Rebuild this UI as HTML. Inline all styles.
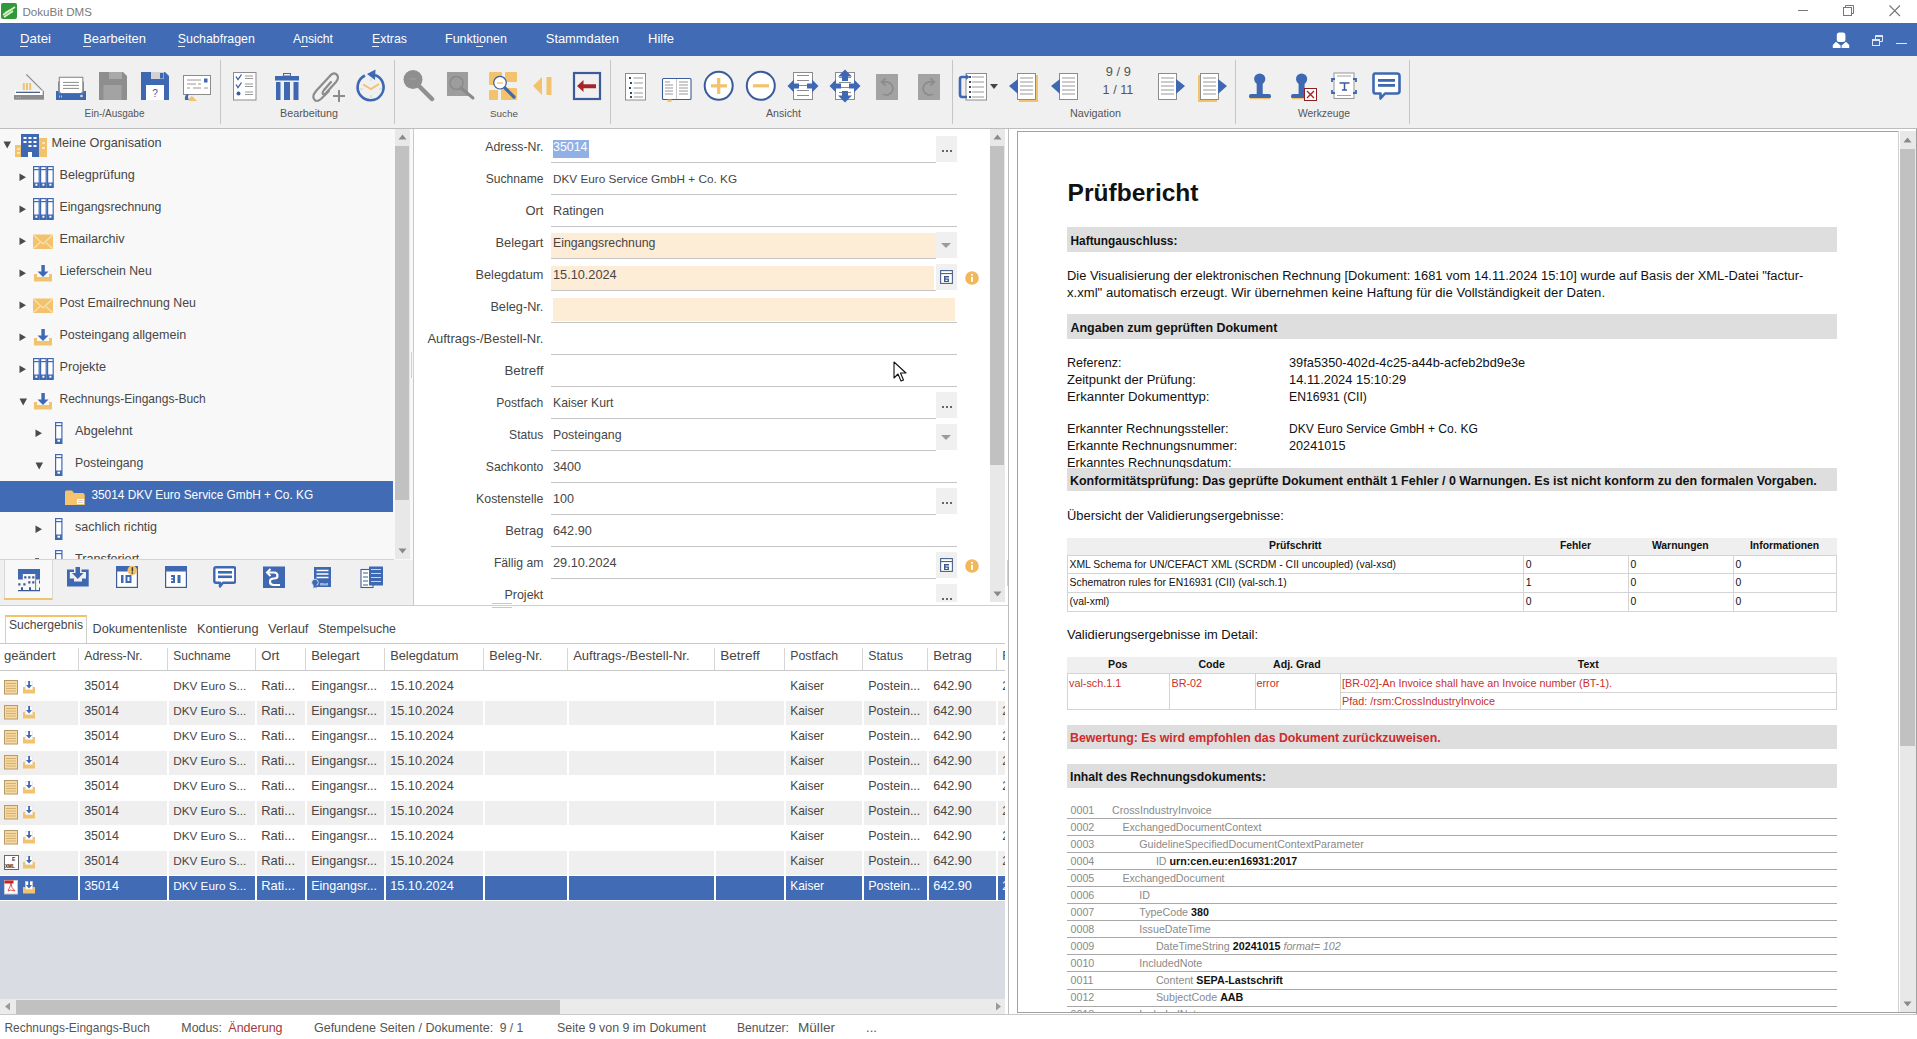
<!DOCTYPE html><html><head><meta charset="utf-8"><style>
*{margin:0;padding:0;box-sizing:border-box}
html,body{width:1917px;height:1039px;overflow:hidden;background:#fff;font-family:"Liberation Sans",sans-serif}
.t{position:absolute;white-space:nowrap}
.r{position:absolute}
</style></head><body>
<div class="r" style="left:0px;top:0px;width:1917px;height:23px;background:#ffffff;"></div>
<svg class="r" style="left:1px;top:3px" width="17" height="17" viewBox="0 0 17 17"><rect x="0" y="0" width="16" height="16" rx="2" fill="#2f9a3a"/><path d="M2 12 L14 4 M3 14 L12 8 M4 10 L11 6" stroke="#dff3c8" stroke-width="1.6"/></svg>
<div class="t" style="left:22.50px;top:7.01px;font-size:11.58px;line-height:11.58px;color:#7a7a7a;">DokuBit DMS</div>
<div class="r" style="left:1798px;top:10px;width:10px;height:1px;background:#777;"></div>
<svg class="r" style="left:1843px;top:4.5px" width="12" height="12"><rect x="0.5" y="2.5" width="8" height="8" fill="none" stroke="#777"/><path d="M2.5 2.5V0.5H10.5V8.5H8.5" fill="none" stroke="#777"/></svg>
<svg class="r" style="left:1888.5px;top:4.5px" width="12" height="12"><path d="M0.5 0.5L11 11M11 0.5L0.5 11" stroke="#777" stroke-width="1.1"/></svg>
<div class="r" style="left:0px;top:23px;width:1917px;height:33px;background:#416bb5;"></div>
<div class="t" style="left:20.00px;top:31.71px;font-size:13.28px;line-height:13.28px;color:#ffffff;">Datei</div>
<div class="t" style="left:83.20px;top:31.71px;font-size:12.98px;line-height:12.98px;color:#ffffff;">Bearbeiten</div>
<div class="t" style="left:177.80px;top:32.71px;font-size:12.37px;line-height:12.37px;color:#ffffff;">Suchabfragen</div>
<div class="t" style="left:293.00px;top:32.71px;font-size:12.20px;line-height:12.20px;color:#ffffff;">Ansicht</div>
<div class="t" style="left:372.00px;top:32.70px;font-size:12.35px;line-height:12.35px;color:#ffffff;">Extras</div>
<div class="t" style="left:445.00px;top:32.71px;font-size:12.53px;line-height:12.53px;color:#ffffff;">Funktionen</div>
<div class="t" style="left:545.80px;top:32.70px;font-size:12.88px;line-height:12.88px;color:#ffffff;">Stammdaten</div>
<div class="t" style="left:648.00px;top:31.71px;font-size:13.00px;line-height:13.00px;color:#ffffff;">Hilfe</div>
<div class="r" style="left:20px;top:46px;width:8px;height:1px;background:#e8eefa;"></div>
<div class="r" style="left:83px;top:46px;width:8px;height:1px;background:#e8eefa;"></div>
<div class="r" style="left:178px;top:46px;width:7px;height:1px;background:#e8eefa;"></div>
<div class="r" style="left:301px;top:46px;width:7px;height:1px;background:#e8eefa;"></div>
<div class="r" style="left:372px;top:46px;width:7px;height:1px;background:#e8eefa;"></div>
<div class="r" style="left:476px;top:46px;width:7px;height:1px;background:#e8eefa;"></div>
<svg class="r" style="left:1832px;top:32px" width="18" height="17" viewBox="0 0 18 17"><rect x="4.8" y="0.5" width="8.6" height="9.5" rx="2.5" fill="#fff"/><path d="M0.8 16 V13 L4 9.8 L8.6 13.5 V16Z M17.2 16 V13 L14 9.8 L9.6 13.5 V16Z" fill="#fff"/></svg>
<svg class="r" style="left:1871px;top:34px" width="13" height="12" viewBox="0 0 13 12"><rect x="1.5" y="5.5" width="7" height="6" fill="none" stroke="#dfe7f5"/><rect x="1.5" y="5" width="7" height="2" fill="#dfe7f5"/><path d="M4.5 5V1.5H11.5V7.5H8.5" fill="none" stroke="#dfe7f5"/><rect x="4.5" y="1" width="7" height="2" fill="#dfe7f5"/></svg>
<div class="r" style="left:1896px;top:43px;width:11px;height:1.2px;background:#dfe7f5;"></div>
<div class="r" style="left:0px;top:56px;width:1917px;height:72px;background:#f0f0f0;"></div>
<div class="r" style="left:220px;top:60px;width:1px;height:64px;background:#c6c6c6;"></div>
<div class="r" style="left:394px;top:60px;width:1px;height:64px;background:#c6c6c6;"></div>
<div class="r" style="left:610px;top:60px;width:1px;height:64px;background:#c6c6c6;"></div>
<div class="r" style="left:952px;top:60px;width:1px;height:64px;background:#c6c6c6;"></div>
<div class="r" style="left:1235px;top:60px;width:1px;height:64px;background:#c6c6c6;"></div>
<div class="r" style="left:1409px;top:60px;width:1px;height:64px;background:#c6c6c6;"></div>
<div class="t" style="left:84.50px;top:108.81px;font-size:9.99px;line-height:9.99px;color:#555555;">Ein-/Ausgabe</div>
<div class="t" style="left:280.00px;top:107.81px;font-size:10.76px;line-height:10.76px;color:#555555;">Bearbeitung</div>
<div class="t" style="left:490.00px;top:108.80px;font-size:9.88px;line-height:9.88px;color:#555555;">Suche</div>
<div class="t" style="left:766.00px;top:107.80px;font-size:10.67px;line-height:10.67px;color:#555555;">Ansicht</div>
<div class="t" style="left:1070.00px;top:107.81px;font-size:10.79px;line-height:10.79px;color:#555555;">Navigation</div>
<div class="t" style="left:1298.00px;top:108.82px;font-size:10.32px;line-height:10.32px;color:#555555;">Werkzeuge</div>
<svg class="r" style="left:14px;top:73px" width="31" height="28" viewBox="0 0 31 28"><path d="M12.3 1.4 L29.3 18.4 V22" fill="none" stroke="#8c8c8c" stroke-width="1.3"/><rect x="0" y="22" width="30" height="4.7" fill="#8c8c8c"/><rect x="1" y="17.6" width="28" height="4.4" fill="#fff"/><rect x="2" y="18.7" width="24" height="1.3" fill="#4a5f85"/><rect x="8.8" y="10" width="2" height="7" fill="#f3c26d"/><rect x="12" y="10" width="2" height="7" fill="#f3c26d"/><rect x="15.2" y="10" width="2" height="7" fill="#f3c26d"/><path d="M29.3 18 V22" stroke="#8c8c8c" stroke-width="1.3"/><path d="M2 24.5h1M4 24.5h1M6 24.5h1" stroke="#bbb" stroke-width="0.8"/></svg>
<svg class="r" style="left:56px;top:76px" width="31" height="25" viewBox="0 0 31 25"><rect x="0" y="15" width="30" height="9" fill="#3f68b3"/><rect x="2" y="5.5" width="1.3" height="10" fill="#8c8c8c"/><rect x="26.7" y="5.5" width="1.3" height="10" fill="#8c8c8c"/><rect x="3.3" y="1.3" width="23.5" height="15.5" fill="#fff" stroke="#8c8c8c" stroke-width="1.1"/><rect x="5" y="14" width="20" height="3" fill="#fff"/><path d="M7 6.4H23M7 9.4H23M7 12.4H23" stroke="#8c8c8c" stroke-width="1"/><path d="M3.5 19.5v2M5.5 19.5v2" stroke="#cfd8ee" stroke-width="0.8"/><circle cx="25.5" cy="20" r="1.3" fill="#ddd"/></svg>
<svg class="r" style="left:99px;top:72px" width="29" height="29" viewBox="0 0 29 29"><path d="M0 0H24L28 4V28H0Z" fill="#8e8e8e"/><rect x="10" y="0" width="13" height="7" fill="#a9a9a9"/><rect x="4.5" y="13" width="18" height="15" fill="#a3a3a3"/></svg>
<svg class="r" style="left:141px;top:72px" width="29" height="29" viewBox="0 0 29 29"><path d="M0 0H24L28 4V28H0Z" fill="#3f68b3"/><rect x="10" y="0" width="13" height="7" fill="#d2d2d2"/><rect x="19" y="1" width="3.5" height="5.5" fill="#3f68b3"/><rect x="5" y="13" width="18" height="15" fill="#fff"/><text x="14" y="24.5" font-size="10" font-family="Liberation Sans" fill="#3b5c9a" text-anchor="middle">?</text></svg>
<svg class="r" style="left:183px;top:75px" width="30" height="28" viewBox="0 0 30 28"><rect x="0.5" y="0.5" width="27" height="19" fill="#fff" stroke="#8c8c8c"/><rect x="21" y="3.5" width="3.5" height="4" fill="#3f68b3"/><path d="M4 5H18M4 9H13M15 9H18M4 13H7M10 13H18M21 13H25" stroke="#8c8c8c" stroke-width="0.9"/><path d="M2 25 Q1 19 6 19 Q4 22 6 25Z" fill="#3f68b3"/><path d="M6 25 Q8 18 12 24 L14 26 H6Z" fill="#f3c26d"/></svg>
<svg class="r" style="left:233px;top:72px" width="24" height="29" viewBox="0 0 24 29"><rect x="0.5" y="0.5" width="22.5" height="27.5" fill="#fff" stroke="#8c8c8c"/><path d="M3 4.5L5 7.5L8.5 2.5M3 12.5L5 15.5L8.5 10.5" fill="none" stroke="#3b5c9a" stroke-width="1.3"/><circle cx="5.5" cy="21.5" r="2" fill="#3b5c9a"/><path d="M12 4H20M12 6.5H20M12 12H20M12 14.5H20M12 20H20M12 22.5H20" stroke="#8c8c8c" stroke-width="0.9"/></svg>
<svg class="r" style="left:274px;top:73px" width="26" height="28" viewBox="0 0 26 28"><rect x="1" y="3" width="24" height="4.5" fill="#3f68b3"/><rect x="9.5" y="0.5" width="7" height="2.5" fill="none" stroke="#3f68b3" stroke-width="1"/><rect x="2" y="9" width="4.5" height="18" fill="#3f68b3"/><rect x="10" y="9" width="6" height="18" fill="#3f68b3"/><rect x="19.5" y="9" width="5" height="18" fill="#3f68b3"/></svg>
<svg class="r" style="left:312px;top:69px" width="34" height="34" viewBox="0 0 34 34"><path d="M17 22 L9 30 Q4 34 2 30 Q0 27 4 22 L17 8 Q21 3 24 5 Q28 8 24 13 L14 24 Q12 26 11 25 Q10 24 12 21 L19 13" fill="none" stroke="#8c8c8c" stroke-width="2.2" stroke-linecap="round"/><path d="M21 27H33M27 21V33" stroke="#8c8c8c" stroke-width="2"/></svg>
<svg class="r" style="left:355px;top:69px" width="33" height="34" viewBox="0 0 33 34"><path d="M10 6.5 A13 13 0 1 0 20 6" fill="none" stroke="#3f68b3" stroke-width="2.6"/><path d="M12 5 L20.5 0.5 L20 11Z" fill="#3f68b3"/><path d="M8 15.5 L16 20 L24 15" fill="none" stroke="#f3c26d" stroke-width="2"/><path d="M16 9.5V12M16 26V29M5 20H8M24 20H27" stroke="#c8c8c8" stroke-width="0.8"/></svg>
<svg class="r" style="left:403px;top:69px" width="33" height="33" viewBox="0 0 33 33"><circle cx="10" cy="10.5" r="9.5" fill="#8f8f8f"/><line x1="15" y1="16" x2="29" y2="30" stroke="#8f8f8f" stroke-width="4.5" stroke-linecap="round"/><path d="M6 10H13" stroke="#a0a0a0" stroke-width="1"/></svg>
<svg class="r" style="left:446px;top:71px" width="30" height="30" viewBox="0 0 30 30"><rect x="1" y="1" width="21" height="24" fill="#9d9d9d"/><circle cx="10.5" cy="12" r="6.5" fill="none" stroke="#8a8a8a" stroke-width="1.5"/><line x1="15" y1="17" x2="27" y2="27" stroke="#8a8a8a" stroke-width="3" stroke-linecap="round"/></svg>
<svg class="r" style="left:489px;top:72px" width="29" height="29" viewBox="0 0 29 29"><rect x="0" y="0" width="13" height="13" rx="1" fill="#f3c26d"/><rect x="16" y="0" width="12" height="10" rx="1" fill="#f3c26d"/><rect x="0" y="18" width="9" height="10" rx="1" fill="#f3c26d"/><rect x="12" y="16" width="16" height="12" rx="1" fill="#f3c26d"/><circle cx="11" cy="10.7" r="6.3" fill="#fff" stroke="#3b5c9a" stroke-width="1.2"/><path d="M8 11H14" stroke="#f3c26d" stroke-width="1.3"/><line x1="16" y1="16" x2="25" y2="25" stroke="#3f68b3" stroke-width="3.2" stroke-linecap="round"/></svg>
<svg class="r" style="left:532px;top:76px" width="22" height="21" viewBox="0 0 22 21"><path d="M1 10 L10 1 V19Z" fill="#f3c26d"/><rect x="14.5" y="1" width="5" height="18" fill="#f3c26d"/></svg>
<svg class="r" style="left:572px;top:71px" width="30" height="30" viewBox="0 0 30 30"><rect x="2" y="2" width="26" height="26" fill="none" stroke="#3b5c9a" stroke-width="2.2"/><path d="M5 15 L11.5 9 V13.3 H24 V17.3 H11.5 V21Z" fill="#a5262a"/></svg>
<svg class="r" style="left:624px;top:72px" width="23" height="29" viewBox="0 0 23 29"><rect x="1.5" y="1.5" width="20" height="26.5" fill="#fff" stroke="#8c8c8c"/><path d="M5 5h2v2h-2zM6 10h2v2h-2zM5 15h2v2h-2zM6 20h2v2h-2zM6 24h2v2h-2z" fill="#3a4a6a"/><path d="M9.5 6H19M10 11H19M9.5 16H19M10 21H19M10 25H19" stroke="#8c8c8c" stroke-width="0.9"/></svg>
<svg class="r" style="left:661px;top:77px" width="32" height="26" viewBox="0 0 32 26"><rect x="1.5" y="1.5" width="28.5" height="21" rx="1" fill="#fff" stroke="#3b5c9a" stroke-width="1.1"/><line x1="15.5" y1="2" x2="15.5" y2="22" stroke="#bbb" stroke-width="0.8"/><path d="M4 5H9M4 8H12M4 11H12M4 14H12M4 17H12M18 5H27M18 8H27M18 11H27M18 14H27M18 17H27" stroke="#8c8c8c" stroke-width="0.9"/><rect x="6.5" y="22.5" width="4" height="2.5" fill="#f3c26d"/></svg>
<svg class="r" style="left:703px;top:70px" width="32" height="32" viewBox="0 0 32 32"><circle cx="15.7" cy="15.8" r="14" fill="#fff" stroke="#3b5c9a" stroke-width="2"/><path d="M8 15.8H24M15.7 8V24" stroke="#f3c26d" stroke-width="3.2"/></svg>
<svg class="r" style="left:745px;top:70px" width="32" height="32" viewBox="0 0 32 32"><circle cx="15.8" cy="15.8" r="14" fill="#fff" stroke="#3b5c9a" stroke-width="2"/><path d="M8 15.8H24" stroke="#f3c26d" stroke-width="3.2"/></svg>
<svg class="r" style="left:787px;top:71px" width="33" height="31" viewBox="0 0 33 31"><rect x="6.5" y="1.5" width="19" height="27" fill="#fff" stroke="#8c8c8c"/><path d="M10 4.5H22M10 9.5H22M10 14.5H22M10 19.5H22M10 24.5H22" stroke="#8c8c8c" stroke-width="1"/><path d="M0.5 15 L7 8.5 V12.5 H12 V17.5 H7 V21.5Z M31.5 15 L25 8.5 V12.5 H20 V17.5 H25 V21.5Z" fill="#3f68b3"/></svg>
<svg class="r" style="left:829px;top:69px" width="33" height="34" viewBox="0 0 33 34"><rect x="6.5" y="3.5" width="19" height="27" fill="#fff" stroke="#8c8c8c"/><path d="M10 8.5H22M10 13.5H22M10 18.5H22M10 23.5H22" stroke="#8c8c8c" stroke-width="1"/><path d="M16 0.5 L23 7.5 H19 V12 H13 V7.5 H9Z M16 33.5 L23 26.5 H19 V22 H13 V26.5 H9Z M0.5 17 L7 10.5 V14.5 H12 V19.5 H7 V23.5Z M31.5 17 L25 10.5 V14.5 H20 V19.5 H25 V23.5Z" fill="#3f68b3"/></svg>
<svg class="r" style="left:876px;top:74px" width="22" height="26" viewBox="0 0 22 26"><rect x="0" y="0" width="22" height="26" fill="#a3a3a3"/><path d="M6 8 H11 A6.5 6.5 0 1 1 7 20" fill="none" stroke="#8d8d8d" stroke-width="1.8"/><path d="M9.5 4.5 L5.5 8 L9.5 11.5" fill="none" stroke="#8d8d8d" stroke-width="1.8"/></svg>
<svg class="r" style="left:918px;top:74px" width="22" height="26" viewBox="0 0 22 26"><rect x="0" y="0" width="22" height="26" fill="#a3a3a3"/><path d="M16 8 H11 A6.5 6.5 0 1 0 15 20" fill="none" stroke="#8d8d8d" stroke-width="1.8"/><path d="M12.5 4.5 L16.5 8 L12.5 11.5" fill="none" stroke="#8d8d8d" stroke-width="1.8"/></svg>
<svg class="r" style="left:958px;top:72px" width="43" height="30" viewBox="0 0 43 30"><rect x="8" y="1.5" width="20.5" height="26.5" fill="#fff" stroke="#8c8c8c"/><path d="M14 5H26M14 10H26M14 15H26M14 20H26M14 25H26" stroke="#8c8c8c" stroke-width="0.9"/><path d="M11 4h2v2h-2zM11 9h2v2h-2zM11 14h2v2h-2zM11 19h2v2h-2zM11 24h2v2h-2z" fill="#3a4a6a"/><path d="M9 5 H4 Q2 5 2 7 V22 Q2 25 4 25 H9" fill="none" stroke="#3f68b3" stroke-width="2.6"/><path d="M8 2 L11.5 5 L8 8Z" fill="#3f68b3"/><path d="M32 12H40L36 17Z" fill="#444"/></svg>
<svg class="r" style="left:1008px;top:72px" width="32" height="31" viewBox="0 0 32 31"><rect x="11" y="3" width="19" height="27" fill="#f3c26d"/><rect x="9.5" y="1.5" width="18" height="26" fill="#fff" stroke="#8c8c8c"/><path d="M12 6H25M12 10H25M12 14H25M12 18H25M12 22H25" stroke="#8c8c8c" stroke-width="0.9"/><path d="M1 14 L10 7 V22Z" fill="#3f68b3"/></svg>
<svg class="r" style="left:1050px;top:72px" width="30" height="31" viewBox="0 0 30 31"><rect x="9.5" y="1.5" width="18" height="26" fill="#fff" stroke="#8c8c8c"/><path d="M12 6H25M12 10H25M12 14H25M12 18H25M12 22H25" stroke="#8c8c8c" stroke-width="0.9"/><path d="M1 14 L10 7 V22Z" fill="#3f68b3"/></svg>
<svg class="r" style="left:1156px;top:72px" width="32" height="31" viewBox="0 0 32 31"><rect x="2.5" y="1.5" width="18" height="26" fill="#fff" stroke="#8c8c8c"/><path d="M5 6H18M5 10H18M5 14H18M5 18H18M5 22H18" stroke="#8c8c8c" stroke-width="0.9"/><path d="M29 14 L20 7 V22Z" fill="#3f68b3"/></svg>
<svg class="r" style="left:1196px;top:72px" width="33" height="31" viewBox="0 0 33 31"><rect x="2" y="3" width="19" height="27" fill="#f3c26d"/><rect x="4.5" y="1.5" width="18" height="26" fill="#fff" stroke="#8c8c8c"/><path d="M7 6H20M7 10H20M7 14H20M7 18H20M7 22H20" stroke="#8c8c8c" stroke-width="0.9"/><path d="M31 14 L22 7 V22Z" fill="#3f68b3"/></svg>
<div class="t" style="left:1105.80px;top:66.01px;font-size:12.85px;line-height:12.85px;color:#555;">9 / 9</div>
<div class="t" style="left:1102.60px;top:84.01px;font-size:12.65px;line-height:12.65px;color:#555;">1 / 11</div>
<svg class="r" style="left:1247px;top:72px" width="26" height="29" viewBox="0 0 26 29"><circle cx="12.7" cy="7" r="5.6" fill="#3f68b3"/><rect x="9.7" y="9" width="6" height="14" fill="#3f68b3"/><rect x="2" y="22" width="22" height="4.5" rx="2" fill="#3f68b3"/><rect x="3" y="26" width="20" height="1.3" fill="#f3c26d"/></svg>
<svg class="r" style="left:1289px;top:72px" width="30" height="30" viewBox="0 0 30 30"><circle cx="12.6" cy="7" r="5.6" fill="#3f68b3"/><rect x="9.6" y="9" width="6" height="14" fill="#3f68b3"/><rect x="2" y="22" width="15" height="4.5" rx="2" fill="#3f68b3"/><rect x="3" y="26" width="13" height="1.3" fill="#f3c26d"/><rect x="15.5" y="16.5" width="12" height="12" fill="#fff" stroke="#8b1e1e" stroke-width="1"/><path d="M18 19L25 26M25 19L18 26" stroke="#a82424" stroke-width="1.4"/></svg>
<svg class="r" style="left:1331px;top:72px" width="27" height="28" viewBox="0 0 27 28"><rect x="3" y="1" width="20" height="25.5" fill="#fff" stroke="#8c8c8c" stroke-width="0.9"/><path d="M6 4H20M6 23.5H20" stroke="#8c8c8c" stroke-width="0.8"/><path d="M1 10V7H4M22 7H25V10M1 18V21H4M22 21H25V18" fill="none" stroke="#3f68b3" stroke-width="1.8"/><path d="M8.5 11H18.5M13.5 11V18M11 18H16" stroke="#3b5c9a" stroke-width="1.5"/></svg>
<svg class="r" style="left:1372px;top:72px" width="29" height="30" viewBox="0 0 29 30"><path d="M3 1.5 H25 Q27.5 1.5 27.5 4 V19 Q27.5 21.5 25 21.5 H13 L8.5 26.5 V21.5 H3 Q1.5 21.5 1.5 19 V4 Q1.5 1.5 3 1.5Z" fill="#fff" stroke="#3f68b3" stroke-width="2.6" stroke-linejoin="round"/><rect x="6" y="7" width="17" height="2.8" fill="#3f68b3"/><rect x="6" y="12" width="17" height="2.8" fill="#3f68b3"/></svg>
<div class="r" style="left:0px;top:129px;width:413px;height:431px;background:#f8f8f8;"></div>
<div class="r" style="left:394.5px;top:129px;width:15px;height:430px;background:#e8e8e8;"></div>
<div class="r" style="left:395px;top:146px;width:14px;height:354px;background:#c1c1c1;"></div>
<svg class="r" style="left:398px;top:133px" width="9" height="8" viewBox="0 0 9 8"><path d="M0.5 6.5 L4.5 1.5 L8.5 6.5Z" fill="#8a8a8a"/></svg>
<svg class="r" style="left:398px;top:547px" width="9" height="8" viewBox="0 0 9 8"><path d="M0.5 1.5 L4.5 6.5 L8.5 1.5Z" fill="#8a8a8a"/></svg>
<div class="r" style="left:413px;top:128px;width:1px;height:477px;background:#c8c8c8;"></div>
<svg class="r" style="left:2.5px;top:140.5px" width="9" height="8" viewBox="0 0 9 8"><path d="M0.5 0.5 H8 L4.2 7.5Z" fill="#4a4a4a"/></svg>
<svg class="r" style="left:15px;top:134px" width="33" height="23" viewBox="0 0 33 23"><rect x="0" y="11" width="11" height="12" fill="#f3c26d"/><rect x="24" y="4" width="8" height="19" fill="#f3c26d"/><rect x="6" y="0" width="18" height="23" fill="#3f68b3"/><path d="M8.5 3h3v2h-3zM13.5 3h3v2h-3zM18.5 3h3v2h-3zM8.5 7h3v2h-3zM13.5 7h3v2h-3zM18.5 7h3v2h-3zM13.5 11h3v2h-3zM18.5 11h3v2h-3zM13 18h4v5h-4z" fill="#fff"/><path d="M2 14h3v2h-3zM2 18h3v2h-3zM27 8h3v2h-3zM27 13h3v2h-3z" fill="#fbe6bd"/></svg>
<div class="t" style="left:51.50px;top:137.01px;font-size:12.69px;line-height:12.69px;color:#464646;">Meine Organisation</div>
<svg class="r" style="left:19px;top:172.5px" width="8" height="9" viewBox="0 0 8 9"><path d="M0.5 0.5 V8 L7 4.2Z" fill="#4a4a4a"/></svg>
<svg class="r" style="left:32.5px;top:166px" width="21" height="22" viewBox="0 0 21 22"><rect x="0.6" y="0.6" width="5.6" height="20.8" fill="#fff" stroke="#3f68b3" stroke-width="1.2"/><rect x="0.6" y="3" width="5.6" height="1.2" fill="#3f68b3"/><rect x="0.6" y="16.5" width="5.6" height="4.9" fill="#3f68b3"/><rect x="2.4" y="17.7" width="2" height="2" fill="#fff"/><rect x="7.6" y="0.6" width="5.6" height="20.8" fill="#fff" stroke="#3f68b3" stroke-width="1.2"/><rect x="7.6" y="3" width="5.6" height="1.2" fill="#3f68b3"/><rect x="7.6" y="16.5" width="5.6" height="4.9" fill="#3f68b3"/><rect x="9.4" y="17.7" width="2" height="2" fill="#fff"/><rect x="14.6" y="0.6" width="5.6" height="20.8" fill="#fff" stroke="#3f68b3" stroke-width="1.2"/><rect x="14.6" y="3" width="5.6" height="1.2" fill="#3f68b3"/><rect x="14.6" y="16.5" width="5.6" height="4.9" fill="#3f68b3"/><rect x="16.4" y="17.7" width="2" height="2" fill="#fff"/></svg>
<div class="t" style="left:59.50px;top:169.02px;font-size:12.66px;line-height:12.66px;color:#464646;">Belegprüfung</div>
<svg class="r" style="left:19px;top:204.5px" width="8" height="9" viewBox="0 0 8 9"><path d="M0.5 0.5 V8 L7 4.2Z" fill="#4a4a4a"/></svg>
<svg class="r" style="left:32.5px;top:198px" width="21" height="22" viewBox="0 0 21 22"><rect x="0.6" y="0.6" width="5.6" height="20.8" fill="#fff" stroke="#3f68b3" stroke-width="1.2"/><rect x="0.6" y="3" width="5.6" height="1.2" fill="#3f68b3"/><rect x="0.6" y="16.5" width="5.6" height="4.9" fill="#3f68b3"/><rect x="2.4" y="17.7" width="2" height="2" fill="#fff"/><rect x="7.6" y="0.6" width="5.6" height="20.8" fill="#fff" stroke="#3f68b3" stroke-width="1.2"/><rect x="7.6" y="3" width="5.6" height="1.2" fill="#3f68b3"/><rect x="7.6" y="16.5" width="5.6" height="4.9" fill="#3f68b3"/><rect x="9.4" y="17.7" width="2" height="2" fill="#fff"/><rect x="14.6" y="0.6" width="5.6" height="20.8" fill="#fff" stroke="#3f68b3" stroke-width="1.2"/><rect x="14.6" y="3" width="5.6" height="1.2" fill="#3f68b3"/><rect x="14.6" y="16.5" width="5.6" height="4.9" fill="#3f68b3"/><rect x="16.4" y="17.7" width="2" height="2" fill="#fff"/></svg>
<div class="t" style="left:59.50px;top:201.01px;font-size:12.23px;line-height:12.23px;color:#464646;">Eingangsrechnung</div>
<svg class="r" style="left:19px;top:236.5px" width="8" height="9" viewBox="0 0 8 9"><path d="M0.5 0.5 V8 L7 4.2Z" fill="#4a4a4a"/></svg>
<svg class="r" style="left:33px;top:234px" width="21" height="16" viewBox="0 0 21 16"><rect x="0" y="0.5" width="20" height="14.5" fill="#f3c26d"/><path d="M0.5 1 L10 10 L19.5 1 M0.5 14.5 L7 8.5 M19.5 14.5 L13 8.5" fill="none" stroke="#fbe3b4" stroke-width="1.1"/></svg>
<div class="t" style="left:59.50px;top:233.01px;font-size:12.58px;line-height:12.58px;color:#464646;">Emailarchiv</div>
<svg class="r" style="left:19px;top:268.5px" width="8" height="9" viewBox="0 0 8 9"><path d="M0.5 0.5 V8 L7 4.2Z" fill="#4a4a4a"/></svg>
<svg class="r" style="left:33px;top:265px" width="20" height="17" viewBox="0 0 20 17"><path d="M1 9 H4 V12 H16 V9 H19 V16.5 H1Z" fill="#f3c26d"/><rect x="8.4" y="0" width="3.4" height="8" fill="#3f68b3"/><path d="M4.5 6.5 H15.5 L10 12Z" fill="#3f68b3"/></svg>
<div class="t" style="left:59.50px;top:265.01px;font-size:12.30px;line-height:12.30px;color:#464646;">Lieferschein Neu</div>
<svg class="r" style="left:19px;top:300.5px" width="8" height="9" viewBox="0 0 8 9"><path d="M0.5 0.5 V8 L7 4.2Z" fill="#4a4a4a"/></svg>
<svg class="r" style="left:33px;top:298px" width="21" height="16" viewBox="0 0 21 16"><rect x="0" y="0.5" width="20" height="14.5" fill="#f3c26d"/><path d="M0.5 1 L10 10 L19.5 1 M0.5 14.5 L7 8.5 M19.5 14.5 L13 8.5" fill="none" stroke="#fbe3b4" stroke-width="1.1"/></svg>
<div class="t" style="left:59.50px;top:297.01px;font-size:12.33px;line-height:12.33px;color:#464646;">Post Emailrechnung Neu</div>
<svg class="r" style="left:19px;top:332.5px" width="8" height="9" viewBox="0 0 8 9"><path d="M0.5 0.5 V8 L7 4.2Z" fill="#4a4a4a"/></svg>
<svg class="r" style="left:33px;top:329px" width="20" height="17" viewBox="0 0 20 17"><path d="M1 9 H4 V12 H16 V9 H19 V16.5 H1Z" fill="#f3c26d"/><rect x="8.4" y="0" width="3.4" height="8" fill="#3f68b3"/><path d="M4.5 6.5 H15.5 L10 12Z" fill="#3f68b3"/></svg>
<div class="t" style="left:59.50px;top:329.01px;font-size:12.52px;line-height:12.52px;color:#464646;">Posteingang allgemein</div>
<svg class="r" style="left:19px;top:364.5px" width="8" height="9" viewBox="0 0 8 9"><path d="M0.5 0.5 V8 L7 4.2Z" fill="#4a4a4a"/></svg>
<svg class="r" style="left:32.5px;top:358px" width="21" height="22" viewBox="0 0 21 22"><rect x="0.6" y="0.6" width="5.6" height="20.8" fill="#fff" stroke="#3f68b3" stroke-width="1.2"/><rect x="0.6" y="3" width="5.6" height="1.2" fill="#3f68b3"/><rect x="0.6" y="16.5" width="5.6" height="4.9" fill="#3f68b3"/><rect x="2.4" y="17.7" width="2" height="2" fill="#fff"/><rect x="7.6" y="0.6" width="5.6" height="20.8" fill="#fff" stroke="#3f68b3" stroke-width="1.2"/><rect x="7.6" y="3" width="5.6" height="1.2" fill="#3f68b3"/><rect x="7.6" y="16.5" width="5.6" height="4.9" fill="#3f68b3"/><rect x="9.4" y="17.7" width="2" height="2" fill="#fff"/><rect x="14.6" y="0.6" width="5.6" height="20.8" fill="#fff" stroke="#3f68b3" stroke-width="1.2"/><rect x="14.6" y="3" width="5.6" height="1.2" fill="#3f68b3"/><rect x="14.6" y="16.5" width="5.6" height="4.9" fill="#3f68b3"/><rect x="16.4" y="17.7" width="2" height="2" fill="#fff"/></svg>
<div class="t" style="left:59.50px;top:361.00px;font-size:12.70px;line-height:12.70px;color:#464646;">Projekte</div>
<svg class="r" style="left:18.5px;top:397.5px" width="9" height="8" viewBox="0 0 9 8"><path d="M0.5 0.5 H8 L4.2 7.5Z" fill="#4a4a4a"/></svg>
<svg class="r" style="left:33px;top:393px" width="20" height="17" viewBox="0 0 20 17"><path d="M1 9 H4 V12 H16 V9 H19 V16.5 H1Z" fill="#f3c26d"/><rect x="8.4" y="0" width="3.4" height="8" fill="#3f68b3"/><path d="M4.5 6.5 H15.5 L10 12Z" fill="#3f68b3"/></svg>
<div class="t" style="left:59.50px;top:393.01px;font-size:12.03px;line-height:12.03px;color:#464646;">Rechnungs-Eingangs-Buch</div>
<svg class="r" style="left:35px;top:428.5px" width="8" height="9" viewBox="0 0 8 9"><path d="M0.5 0.5 V8 L7 4.2Z" fill="#4a4a4a"/></svg>
<svg class="r" style="left:55px;top:422px" width="8" height="22" viewBox="0 0 8 22"><rect x="0.6" y="0.6" width="6.3" height="20.8" fill="#fff" stroke="#3f68b3" stroke-width="1.2"/><rect x="0.6" y="3" width="6.3" height="1.2" fill="#3f68b3"/><rect x="0.6" y="16.5" width="6.3" height="4.9" fill="#3f68b3"/><rect x="2.5" y="17.7" width="2.5" height="2" fill="#fff"/></svg>
<div class="t" style="left:75.00px;top:425.02px;font-size:12.79px;line-height:12.79px;color:#464646;">Abgelehnt</div>
<svg class="r" style="left:34.5px;top:461.5px" width="9" height="8" viewBox="0 0 9 8"><path d="M0.5 0.5 H8 L4.2 7.5Z" fill="#4a4a4a"/></svg>
<svg class="r" style="left:55px;top:454px" width="8" height="22" viewBox="0 0 8 22"><rect x="0.6" y="0.6" width="6.3" height="20.8" fill="#fff" stroke="#3f68b3" stroke-width="1.2"/><rect x="0.6" y="3" width="6.3" height="1.2" fill="#3f68b3"/><rect x="0.6" y="16.5" width="6.3" height="4.9" fill="#3f68b3"/><rect x="2.5" y="17.7" width="2.5" height="2" fill="#fff"/></svg>
<div class="t" style="left:75.00px;top:457.01px;font-size:12.28px;line-height:12.28px;color:#464646;">Posteingang</div>
<div class="r" style="left:0px;top:481px;width:393px;height:30.5px;background:#416bb5;"></div>
<svg class="r" style="left:65px;top:490px" width="20" height="16" viewBox="0 0 20 16"><path d="M0 2 Q0 0.5 1.5 0.5 H7 L9 3 H18 Q19.5 3 19.5 4.5 V15 H0Z" fill="#f3c26d"/><rect x="0" y="5" width="19.5" height="10" fill="#f6c46f"/><rect x="12" y="9" width="7" height="5" fill="#fff"/><path d="M13 10.5H18M13 12.5H18" stroke="#bbb" stroke-width="0.7"/></svg>
<div class="t" style="left:91.40px;top:490.01px;font-size:11.87px;line-height:11.87px;color:#ffffff;">35014 DKV Euro Service GmbH + Co. KG</div>
<svg class="r" style="left:35px;top:524.5px" width="8" height="9" viewBox="0 0 8 9"><path d="M0.5 0.5 V8 L7 4.2Z" fill="#4a4a4a"/></svg>
<svg class="r" style="left:55px;top:518px" width="8" height="22" viewBox="0 0 8 22"><rect x="0.6" y="0.6" width="6.3" height="20.8" fill="#fff" stroke="#3f68b3" stroke-width="1.2"/><rect x="0.6" y="3" width="6.3" height="1.2" fill="#3f68b3"/><rect x="0.6" y="16.5" width="6.3" height="4.9" fill="#3f68b3"/><rect x="2.5" y="17.7" width="2.5" height="2" fill="#fff"/></svg>
<div class="t" style="left:75.00px;top:521.01px;font-size:12.52px;line-height:12.52px;color:#464646;">sachlich richtig</div>
<div class="r" style="left:0;top:548px;width:394px;height:11px;overflow:hidden">
<div class="t" style="left:75.00px;top:5.01px;font-size:12.69px;line-height:12.69px;color:#464646;">Transferiert</div>
<svg class="r" style="left:55px;top:2px" width="8" height="22"><rect x="0.6" y="0.6" width="6.3" height="20.8" fill="#fff" stroke="#3f68b3" stroke-width="1.2"/><rect x="0.6" y="3" width="6.3" height="1.2" fill="#3f68b3"/></svg>
<div class="r" style="left:35px;top:10px;width:4px;height:2px;background:#666"></div>
</div>
<div class="r" style="left:0px;top:559.5px;width:413px;height:45.5px;background:#f0f0f0;"></div>
<div class="r" style="left:0px;top:559px;width:394px;height:1px;background:#d4d4d4;"></div>
<div class="r" style="left:4px;top:560px;width:48px;height:40px;background:#f8f8f8;"></div>
<div class="r" style="left:4px;top:560px;width:1px;height:40px;background:#d8d8d8;"></div>
<div class="r" style="left:52px;top:560px;width:1px;height:40px;background:#d8d8d8;"></div>
<div class="r" style="left:4px;top:598px;width:48px;height:2px;background:#f3c26d;"></div>
<div class="r" style="left:0px;top:604.5px;width:1009px;height:1px;background:#cfcfcf;"></div>
<svg class="r" style="left:18px;top:569px" width="23" height="23" viewBox="0 0 23 23"><rect x="0" y="0" width="22" height="10.5" fill="#3f68b3"/><rect x="4.8" y="5" width="12.5" height="17" fill="#f7f7f7"/><path d="M6.2 7.3h2.2v2.2h-2.2zM10.2 7.3h2.2v2.2h-2.2zM14.2 7.3h2.2v2.2h-2.2zM10.2 12.3h2.2v2.2h-2.2zM14.2 12.3h2.2v2.2h-2.2zM0.3 14.3h2.2v2.2h-2.2zM5.3 14.3h2.2v2.2h-2.2zM21 11.5h1v3h-1zM17.3 10.5h0.8v11h-0.8zM3 18.3h2v2.7h-2zM11 18.3h2v2.7h-2zM21 18.5h1v2.5h-1zM0 21h22v1.2h-22z" fill="#3b5a94"/></svg>
<svg class="r" style="left:66px;top:566px" width="23" height="23" viewBox="0 0 23 23"><path d="M1 3.5 H8 V6 H3.8 V12.5 H8 V15.5 H16 V12.5 H20 V6 H15.5 V3.5 H22.7 V20.6 H1Z" fill="#3f68b3"/><rect x="9.5" y="1" width="4.5" height="6.5" fill="#3f68b3"/><path d="M6 7 H17.5 L11.8 13Z" fill="#3f68b3"/></svg>
<svg class="r" style="left:115px;top:566px" width="23" height="23" viewBox="0 0 23 23"><rect x="1.6" y="0.6" width="20.8" height="20.8" fill="#fff" stroke="#3b5c9a" stroke-width="1.2"/><rect x="1" y="0" width="22" height="5.5" fill="#3f68b3"/><path d="M6 9h2.5v8h-2.5zM10.5 9h6v8h-6z" fill="#3f68b3"/><rect x="12.5" y="11" width="2" height="4" fill="#fff"/><circle cx="17.3" cy="4.4" r="4.8" fill="#f3c26d"/><rect x="16.6" y="1.2" width="1.5" height="4.3" fill="#3a3a3a"/><rect x="16.6" y="6.3" width="1.5" height="1.4" fill="#3a3a3a"/></svg>
<svg class="r" style="left:164px;top:566px" width="23" height="23" viewBox="0 0 23 23"><rect x="1.6" y="0.6" width="20.8" height="20.8" fill="#fff" stroke="#3b5c9a" stroke-width="1.2"/><rect x="1" y="0" width="22" height="5.5" fill="#3f68b3"/><path d="M7 9h4v8h-4v-2h2v-1.2h-2v-1.6h2v-1.2h-2z" fill="#3f68b3"/><rect x="13.5" y="9" width="3" height="8" fill="#3f68b3"/></svg>
<svg class="r" style="left:213px;top:566px" width="23" height="23" viewBox="0 0 23 23"><path d="M3 1.3 H20.5 Q22.3 1.3 22.3 3 V15 Q22.3 16.8 20.5 16.8 H10 L7 20.5 V16.8 H3 Q1.3 16.8 1.3 15 V3 Q1.3 1.3 3 1.3Z" fill="#fff" stroke="#3f68b3" stroke-width="2.4" stroke-linejoin="round"/><rect x="5" y="5" width="14" height="2.6" fill="#3f68b3"/><rect x="5" y="9.5" width="14" height="2.6" fill="#3f68b3"/></svg>
<svg class="r" style="left:262px;top:566px" width="23" height="23" viewBox="0 0 23 23"><rect x="1" y="0.5" width="22" height="21.5" fill="#3f68b3"/><path d="M8.5 3 L5 6.5 L8.5 10" fill="none" stroke="#fff" stroke-width="2"/><path d="M5.5 6.5 H12 Q15.5 6.5 15.5 10 Q15.5 12.5 12 12.5 Q8 12.5 8 15.5 Q8 19 12 19 H18" fill="none" stroke="#fff" stroke-width="2.2"/></svg>
<svg class="r" style="left:311px;top:566px" width="23" height="23" viewBox="0 0 23 23"><rect x="3" y="1" width="17" height="20" fill="#3f68b3"/><path d="M5.5 4.5H17.5M5.5 8H17.5M5.5 11.5H17.5" stroke="#fff" stroke-width="1.3"/><rect x="7" y="15" width="13" height="6" fill="#3f68b3"/><path d="M10 17v2.5M12 17v2.5M14 17.5v2M16 17v2.5" stroke="#fff" stroke-width="1"/><circle cx="4" cy="16.5" r="3.3" fill="#3f68b3" stroke="#f0f0f0" stroke-width="0.8"/><path d="M2.5 19 V22.5 L4 21 L5.5 22.5 V19" fill="#3f68b3"/></svg>
<svg class="r" style="left:360px;top:566px" width="23" height="23" viewBox="0 0 23 23"><rect x="1" y="3.5" width="12" height="18" fill="#fff" stroke="#3b5c9a" stroke-width="1.1"/><path d="M3 7H8M3 11H8M3 15H8M3 19H8" stroke="#3b5c9a" stroke-width="1.1"/><rect x="9" y="0.5" width="14" height="19" fill="#3f68b3"/><path d="M11 3.5H21M11 7.5H21M11 11.5H21M11 15.5H21" stroke="#c9d3ea" stroke-width="1.1"/></svg>
<div class="r" style="left:414px;top:129px;width:595px;height:476px;background:#ffffff;"></div>
<div class="r" style="left:989.5px;top:129px;width:15px;height:473px;background:#e8e8e8;"></div>
<div class="r" style="left:990px;top:146px;width:14px;height:319px;background:#c1c1c1;"></div>
<svg class="r" style="left:993px;top:133px" width="9" height="8" viewBox="0 0 9 8"><path d="M0.5 6.5 L4.5 1.5 L8.5 6.5Z" fill="#8a8a8a"/></svg>
<svg class="r" style="left:993px;top:590px" width="9" height="8" viewBox="0 0 9 8"><path d="M0.5 1.5 L4.5 6.5 L8.5 1.5Z" fill="#8a8a8a"/></svg>
<div class="r" style="left:1008px;top:128px;width:1px;height:887px;background:#bdbdbd;"></div>
<div class="r" style="left:414px;top:129px;width:575px;height:473px;overflow:hidden">
<div class="r" style="left:137px;top:33px;width:385px;height:1px;background:#c4c4c4"></div>
<div class="r" style="left:522px;top:7px;width:21px;height:26px;background:#f0f0f0"></div>
<div class="r" style="left:527.5px;top:20.5px;width:2px;height:2px;background:#666"></div>
<div class="r" style="left:531.5px;top:20.5px;width:2px;height:2px;background:#666"></div>
<div class="r" style="left:535.5px;top:20.5px;width:2px;height:2px;background:#666"></div>
<div class="t" style="left:71.20px;top:12.01px;font-size:12.32px;line-height:12.32px;color:#464646;">Adress-Nr.</div>
<div class="r" style="left:139px;top:11px;width:36px;height:18px;background:#91b1e6"></div>
<div class="t" style="left:139.00px;top:12.00px;font-size:12.40px;line-height:12.40px;color:#ffffff;">35014</div>
<div class="r" style="left:137px;top:65px;width:406px;height:1px;background:#c4c4c4"></div>
<div class="t" style="left:71.80px;top:44.00px;font-size:12.05px;line-height:12.05px;color:#464646;">Suchname</div>
<div class="t" style="left:139.00px;top:44.01px;font-size:11.78px;line-height:11.78px;color:#464646;">DKV Euro Service GmbH + Co. KG</div>
<div class="r" style="left:137px;top:97px;width:406px;height:1px;background:#c4c4c4"></div>
<div class="t" style="left:111.40px;top:76.01px;font-size:12.96px;line-height:12.96px;color:#464646;">Ort</div>
<div class="t" style="left:139.00px;top:76.01px;font-size:12.69px;line-height:12.69px;color:#464646;">Ratingen</div>
<div class="r" style="left:137px;top:104px;width:385px;height:25px;background:#fdecd6"></div>
<div class="r" style="left:137px;top:129px;width:385px;height:1px;background:#c4c4c4"></div>
<div class="r" style="left:522px;top:103px;width:21px;height:26px;background:#f0f0f0"></div>
<svg class="r" style="left:526px;top:113px" width="12" height="7"><path d="M1 1H11L6 6Z" fill="#9b9b9b"/></svg>
<div class="t" style="left:81.50px;top:108.00px;font-size:12.86px;line-height:12.86px;color:#464646;">Belegart</div>
<div class="t" style="left:139.00px;top:108.00px;font-size:12.29px;line-height:12.29px;color:#464646;">Eingangsrechnung</div>
<div class="r" style="left:137px;top:137px;width:383px;height:24px;background:#fdecd6"></div>
<div class="r" style="left:137px;top:161px;width:385px;height:1px;background:#c4c4c4"></div>
<div class="r" style="left:522px;top:135px;width:21px;height:26px;background:#f0f0f0"></div>
<svg class="r" style="left:526px;top:141px" width="13" height="14"><rect x="0.6" y="0.6" width="11.8" height="12.8" fill="#fff" stroke="#4a6288" stroke-width="1.1"/><rect x="0.6" y="3" width="11.8" height="1.1" fill="#4a6288"/><path d="M4 6H9V7.5H5.5V8.5H9V12H4Z" fill="#3d5a88"/><rect x="5.5" y="9.7" width="2" height="1.3" fill="#fff"/></svg>
<svg class="r" style="left:551px;top:142px" width="14" height="14"><circle cx="7" cy="7" r="6.8" fill="#f2b75a"/><rect x="6.1" y="5.8" width="1.8" height="5" fill="#fff"/><circle cx="7" cy="3.8" r="1" fill="#fff"/></svg>
<div class="t" style="left:61.50px;top:140.01px;font-size:12.72px;line-height:12.72px;color:#464646;">Belegdatum</div>
<div class="t" style="left:139.00px;top:140.01px;font-size:12.73px;line-height:12.73px;color:#464646;">15.10.2024</div>
<div class="r" style="left:139px;top:169px;width:402px;height:23px;background:#fdecd6"></div>
<div class="r" style="left:137px;top:193px;width:406px;height:1px;background:#c4c4c4"></div>
<div class="t" style="left:76.40px;top:172.00px;font-size:12.72px;line-height:12.72px;color:#464646;">Beleg-Nr.</div>
<div class="r" style="left:137px;top:225px;width:406px;height:1px;background:#c4c4c4"></div>
<div class="t" style="left:13.40px;top:204.01px;font-size:12.97px;line-height:12.97px;color:#464646;">Auftrags-/Bestell-Nr.</div>
<div class="r" style="left:137px;top:257px;width:406px;height:1px;background:#c4c4c4"></div>
<div class="t" style="left:90.40px;top:235.00px;font-size:13.32px;line-height:13.32px;color:#464646;">Betreff</div>
<div class="r" style="left:137px;top:289px;width:385px;height:1px;background:#c4c4c4"></div>
<div class="r" style="left:522px;top:263px;width:21px;height:26px;background:#f0f0f0"></div>
<div class="r" style="left:527.5px;top:276.5px;width:2px;height:2px;background:#666"></div>
<div class="r" style="left:531.5px;top:276.5px;width:2px;height:2px;background:#666"></div>
<div class="r" style="left:535.5px;top:276.5px;width:2px;height:2px;background:#666"></div>
<div class="t" style="left:82.20px;top:268.01px;font-size:12.13px;line-height:12.13px;color:#464646;">Postfach</div>
<div class="t" style="left:139.00px;top:268.01px;font-size:12.23px;line-height:12.23px;color:#464646;">Kaiser Kurt</div>
<div class="r" style="left:137px;top:321px;width:385px;height:1px;background:#c4c4c4"></div>
<div class="r" style="left:522px;top:295px;width:21px;height:26px;background:#f0f0f0"></div>
<svg class="r" style="left:526px;top:305px" width="12" height="7"><path d="M1 1H11L6 6Z" fill="#9b9b9b"/></svg>
<div class="t" style="left:95.10px;top:300.01px;font-size:12.10px;line-height:12.10px;color:#464646;">Status</div>
<div class="t" style="left:139.00px;top:300.01px;font-size:12.34px;line-height:12.34px;color:#464646;">Posteingang</div>
<div class="r" style="left:137px;top:353px;width:406px;height:1px;background:#c4c4c4"></div>
<div class="t" style="left:71.80px;top:332.01px;font-size:12.19px;line-height:12.19px;color:#464646;">Sachkonto</div>
<div class="t" style="left:139.00px;top:332.01px;font-size:12.63px;line-height:12.63px;color:#464646;">3400</div>
<div class="r" style="left:137px;top:385px;width:385px;height:1px;background:#c4c4c4"></div>
<div class="r" style="left:522px;top:359px;width:21px;height:26px;background:#f0f0f0"></div>
<div class="r" style="left:527.5px;top:372.5px;width:2px;height:2px;background:#666"></div>
<div class="r" style="left:531.5px;top:372.5px;width:2px;height:2px;background:#666"></div>
<div class="r" style="left:535.5px;top:372.5px;width:2px;height:2px;background:#666"></div>
<div class="t" style="left:62.10px;top:364.01px;font-size:12.35px;line-height:12.35px;color:#464646;">Kostenstelle</div>
<div class="t" style="left:139.00px;top:364.02px;font-size:12.59px;line-height:12.59px;color:#464646;">100</div>
<div class="r" style="left:137px;top:417px;width:406px;height:1px;background:#c4c4c4"></div>
<div class="t" style="left:91.20px;top:396.01px;font-size:12.97px;line-height:12.97px;color:#464646;">Betrag</div>
<div class="t" style="left:139.00px;top:396.01px;font-size:12.69px;line-height:12.69px;color:#464646;">642.90</div>
<div class="r" style="left:137px;top:449px;width:385px;height:1px;background:#c4c4c4"></div>
<div class="r" style="left:522px;top:423px;width:21px;height:26px;background:#f0f0f0"></div>
<svg class="r" style="left:526px;top:429px" width="13" height="14"><rect x="0.6" y="0.6" width="11.8" height="12.8" fill="#fff" stroke="#4a6288" stroke-width="1.1"/><rect x="0.6" y="3" width="11.8" height="1.1" fill="#4a6288"/><path d="M4 6H9V7.5H5.5V8.5H9V12H4Z" fill="#3d5a88"/><rect x="5.5" y="9.7" width="2" height="1.3" fill="#fff"/></svg>
<svg class="r" style="left:551px;top:430px" width="14" height="14"><circle cx="7" cy="7" r="6.8" fill="#f2b75a"/><rect x="6.1" y="5.8" width="1.8" height="5" fill="#fff"/><circle cx="7" cy="3.8" r="1" fill="#fff"/></svg>
<div class="t" style="left:79.90px;top:428.01px;font-size:12.20px;line-height:12.20px;color:#464646;">Fällig am</div>
<div class="t" style="left:139.00px;top:428.01px;font-size:12.73px;line-height:12.73px;color:#464646;">29.10.2024</div>
<div class="r" style="left:137px;top:481px;width:385px;height:1px;background:#c4c4c4"></div>
<div class="r" style="left:522px;top:455px;width:21px;height:26px;background:#f0f0f0"></div>
<div class="r" style="left:527.5px;top:468.5px;width:2px;height:2px;background:#666"></div>
<div class="r" style="left:531.5px;top:468.5px;width:2px;height:2px;background:#666"></div>
<div class="r" style="left:535.5px;top:468.5px;width:2px;height:2px;background:#666"></div>
<div class="t" style="left:90.40px;top:460.02px;font-size:12.53px;line-height:12.53px;color:#464646;">Projekt</div>
</div>
<svg class="r" style="left:893px;top:361px" width="14" height="22" viewBox="0 0 14 22"><path d="M1 1 V17 L5 13 L8 20 L10.5 19 L7.5 12 H13Z" fill="#fff" stroke="#111" stroke-width="1.1" stroke-linejoin="round"/></svg>
<div class="r" style="left:411px;top:352px;width:1px;height:26px;background:#cfcfcf;"></div>
<div class="r" style="left:413px;top:352px;width:1px;height:26px;background:#cfcfcf;"></div>
<div class="r" style="left:1007px;top:560px;width:1px;height:26px;background:#cfcfcf;"></div>
<div class="r" style="left:492px;top:602.5px;width:20px;height:1px;background:#c8c8c8;"></div>
<div class="r" style="left:0px;top:605.5px;width:1008px;height:37px;background:#ffffff;"></div>
<div class="r" style="left:0px;top:642.5px;width:1005px;height:1px;background:#c9c9c9;"></div>
<div class="r" style="left:492px;top:607px;width:20px;height:1px;background:#c8c8c8;"></div>
<div class="r" style="left:4.5px;top:616px;width:82px;height:27px;background:#ffffff;"></div>
<div class="r" style="left:4.5px;top:616px;width:1px;height:27px;background:#cfcfcf;"></div>
<div class="r" style="left:86px;top:616px;width:1px;height:27px;background:#cfcfcf;"></div>
<div class="r" style="left:4.5px;top:614.5px;width:82px;height:2.2px;background:#f3c26d;"></div>
<div class="t" style="left:9.00px;top:618.51px;font-size:12.10px;line-height:12.10px;color:#464646;">Suchergebnis</div>
<div class="t" style="left:92.50px;top:622.60px;font-size:12.69px;line-height:12.69px;color:#464646;">Dokumentenliste</div>
<div class="t" style="left:197.00px;top:622.61px;font-size:12.72px;line-height:12.72px;color:#464646;">Kontierung</div>
<div class="t" style="left:268.00px;top:621.61px;font-size:13.01px;line-height:13.01px;color:#464646;">Verlauf</div>
<div class="t" style="left:318.00px;top:622.61px;font-size:12.31px;line-height:12.31px;color:#464646;">Stempelsuche</div>
<div class="r" style="left:0px;top:643.5px;width:1005px;height:27px;background:#ffffff;"></div>
<div class="r" style="left:0px;top:670px;width:1005px;height:1px;background:#c9c9c9;"></div>
<div class="r" style="left:0;top:643px;width:1005px;height:357px;overflow:hidden">
<div class="t" style="left:4.00px;top:6.31px;font-size:13.05px;line-height:13.05px;color:#464646;">geändert</div>
<div class="t" style="left:84.20px;top:7.31px;font-size:12.34px;line-height:12.34px;color:#464646;">Adress-Nr.</div>
<div class="r" style="left:78px;top:5px;width:1px;height:22px;background:#d6d6d6"></div>
<div class="t" style="left:173.20px;top:7.31px;font-size:12.03px;line-height:12.03px;color:#464646;">Suchname</div>
<div class="r" style="left:167px;top:5px;width:1px;height:22px;background:#d6d6d6"></div>
<div class="t" style="left:261.20px;top:6.30px;font-size:13.11px;line-height:13.11px;color:#464646;">Ort</div>
<div class="r" style="left:255px;top:5px;width:1px;height:22px;background:#d6d6d6"></div>
<div class="t" style="left:311.20px;top:7.31px;font-size:12.97px;line-height:12.97px;color:#464646;">Belegart</div>
<div class="r" style="left:305px;top:5px;width:1px;height:22px;background:#d6d6d6"></div>
<div class="t" style="left:390.20px;top:7.30px;font-size:12.80px;line-height:12.80px;color:#464646;">Belegdatum</div>
<div class="r" style="left:384px;top:5px;width:1px;height:22px;background:#d6d6d6"></div>
<div class="t" style="left:489.20px;top:7.30px;font-size:12.76px;line-height:12.76px;color:#464646;">Beleg-Nr.</div>
<div class="r" style="left:483px;top:5px;width:1px;height:22px;background:#d6d6d6"></div>
<div class="t" style="left:573.20px;top:6.30px;font-size:13.00px;line-height:13.00px;color:#464646;">Auftrags-/Bestell-Nr.</div>
<div class="r" style="left:567px;top:5px;width:1px;height:22px;background:#d6d6d6"></div>
<div class="t" style="left:720.20px;top:6.31px;font-size:13.56px;line-height:13.56px;color:#464646;">Betreff</div>
<div class="r" style="left:714px;top:5px;width:1px;height:22px;background:#d6d6d6"></div>
<div class="t" style="left:790.20px;top:7.30px;font-size:12.31px;line-height:12.31px;color:#464646;">Postfach</div>
<div class="r" style="left:784px;top:5px;width:1px;height:22px;background:#d6d6d6"></div>
<div class="t" style="left:868.20px;top:7.30px;font-size:12.31px;line-height:12.31px;color:#464646;">Status</div>
<div class="r" style="left:862px;top:5px;width:1px;height:22px;background:#d6d6d6"></div>
<div class="t" style="left:933.20px;top:6.31px;font-size:13.10px;line-height:13.10px;color:#464646;">Betrag</div>
<div class="r" style="left:927px;top:5px;width:1px;height:22px;background:#d6d6d6"></div>
<div class="t" style="left:1002.20px;top:7.31px;font-size:12.60px;line-height:12.60px;color:#464646;">F</div>
<div class="r" style="left:996px;top:5px;width:1px;height:22px;background:#d6d6d6"></div>
<div class="r" style="left:0px;top:257px;width:1005px;height:100px;background:#d9dce2"></div>
<div class="t" style="left:84.20px;top:36.50px;font-size:12.48px;line-height:12.48px;color:#464646;">35014</div>
<div class="t" style="left:173.20px;top:36.50px;font-size:11.76px;line-height:11.76px;color:#464646;">DKV Euro S...</div>
<div class="t" style="left:261.20px;top:35.51px;font-size:12.98px;line-height:12.98px;color:#464646;">Rati...</div>
<div class="t" style="left:311.20px;top:36.50px;font-size:12.48px;line-height:12.48px;color:#464646;">Eingangsr...</div>
<div class="t" style="left:390.20px;top:36.51px;font-size:12.69px;line-height:12.69px;color:#464646;">15.10.2024</div>
<div class="t" style="left:790.20px;top:37.50px;font-size:11.93px;line-height:11.93px;color:#464646;">Kaiser</div>
<div class="t" style="left:868.20px;top:36.51px;font-size:12.50px;line-height:12.50px;color:#464646;">Postein...</div>
<div class="t" style="left:933.20px;top:36.50px;font-size:12.62px;line-height:12.62px;color:#464646;">642.90</div>
<div class="t" style="left:1002.20px;top:36.51px;font-size:12.60px;line-height:12.60px;color:#464646;">2</div>
<svg class="r" style="left:4px;top:36.5px" width="14" height="15"><rect x="0.5" y="0.5" width="13" height="13.5" fill="#f7d9a0" stroke="#b59a6a"/><path d="M2 3.5H12M2 6H12M2 8.5H12M2 11H12" stroke="#c9a76a" stroke-width="0.8"/></svg>
<svg class="r" style="left:22px;top:36.5px" width="14" height="14"><path d="M1 7 H3.5 V9.5 H10.5 V7 H13 V13.5 H1Z" fill="#f3c26d"/><rect x="3.5" y="1.5" width="7" height="8" fill="#fff" stroke="#ddd" stroke-width="0.5"/><rect x="6.2" y="1" width="1.8" height="5" fill="#3f68b3"/><path d="M4 5H10L7 8.5Z" fill="#3f68b3"/></svg>
<div class="r" style="left:0px;top:57.5px;width:1005px;height:24.5px;background:#efefef"></div>
<div class="r" style="left:78px;top:57.5px;width:2px;height:24.5px;background:#ffffff"></div>
<div class="r" style="left:167px;top:57.5px;width:2px;height:24.5px;background:#ffffff"></div>
<div class="r" style="left:255px;top:57.5px;width:2px;height:24.5px;background:#ffffff"></div>
<div class="r" style="left:305px;top:57.5px;width:2px;height:24.5px;background:#ffffff"></div>
<div class="r" style="left:384px;top:57.5px;width:2px;height:24.5px;background:#ffffff"></div>
<div class="r" style="left:483px;top:57.5px;width:2px;height:24.5px;background:#ffffff"></div>
<div class="r" style="left:567px;top:57.5px;width:2px;height:24.5px;background:#ffffff"></div>
<div class="r" style="left:714px;top:57.5px;width:2px;height:24.5px;background:#ffffff"></div>
<div class="r" style="left:784px;top:57.5px;width:2px;height:24.5px;background:#ffffff"></div>
<div class="r" style="left:862px;top:57.5px;width:2px;height:24.5px;background:#ffffff"></div>
<div class="r" style="left:927px;top:57.5px;width:2px;height:24.5px;background:#ffffff"></div>
<div class="r" style="left:996px;top:57.5px;width:2px;height:24.5px;background:#ffffff"></div>
<div class="t" style="left:84.20px;top:61.50px;font-size:12.48px;line-height:12.48px;color:#464646;">35014</div>
<div class="t" style="left:173.20px;top:61.50px;font-size:11.76px;line-height:11.76px;color:#464646;">DKV Euro S...</div>
<div class="t" style="left:261.20px;top:60.51px;font-size:12.98px;line-height:12.98px;color:#464646;">Rati...</div>
<div class="t" style="left:311.20px;top:61.50px;font-size:12.48px;line-height:12.48px;color:#464646;">Eingangsr...</div>
<div class="t" style="left:390.20px;top:61.51px;font-size:12.69px;line-height:12.69px;color:#464646;">15.10.2024</div>
<div class="t" style="left:790.20px;top:62.50px;font-size:11.93px;line-height:11.93px;color:#464646;">Kaiser</div>
<div class="t" style="left:868.20px;top:61.51px;font-size:12.50px;line-height:12.50px;color:#464646;">Postein...</div>
<div class="t" style="left:933.20px;top:61.50px;font-size:12.62px;line-height:12.62px;color:#464646;">642.90</div>
<div class="t" style="left:1002.20px;top:61.51px;font-size:12.60px;line-height:12.60px;color:#464646;">2</div>
<svg class="r" style="left:4px;top:61.5px" width="14" height="15"><rect x="0.5" y="0.5" width="13" height="13.5" fill="#f7d9a0" stroke="#b59a6a"/><path d="M2 3.5H12M2 6H12M2 8.5H12M2 11H12" stroke="#c9a76a" stroke-width="0.8"/></svg>
<svg class="r" style="left:22px;top:61.5px" width="14" height="14"><path d="M1 7 H3.5 V9.5 H10.5 V7 H13 V13.5 H1Z" fill="#f3c26d"/><rect x="3.5" y="1.5" width="7" height="8" fill="#fff" stroke="#ddd" stroke-width="0.5"/><rect x="6.2" y="1" width="1.8" height="5" fill="#3f68b3"/><path d="M4 5H10L7 8.5Z" fill="#3f68b3"/></svg>
<div class="t" style="left:84.20px;top:86.50px;font-size:12.48px;line-height:12.48px;color:#464646;">35014</div>
<div class="t" style="left:173.20px;top:86.50px;font-size:11.76px;line-height:11.76px;color:#464646;">DKV Euro S...</div>
<div class="t" style="left:261.20px;top:85.51px;font-size:12.98px;line-height:12.98px;color:#464646;">Rati...</div>
<div class="t" style="left:311.20px;top:86.50px;font-size:12.48px;line-height:12.48px;color:#464646;">Eingangsr...</div>
<div class="t" style="left:390.20px;top:86.51px;font-size:12.69px;line-height:12.69px;color:#464646;">15.10.2024</div>
<div class="t" style="left:790.20px;top:87.50px;font-size:11.93px;line-height:11.93px;color:#464646;">Kaiser</div>
<div class="t" style="left:868.20px;top:86.51px;font-size:12.50px;line-height:12.50px;color:#464646;">Postein...</div>
<div class="t" style="left:933.20px;top:86.50px;font-size:12.62px;line-height:12.62px;color:#464646;">642.90</div>
<div class="t" style="left:1002.20px;top:86.51px;font-size:12.60px;line-height:12.60px;color:#464646;">2</div>
<svg class="r" style="left:4px;top:86.5px" width="14" height="15"><rect x="0.5" y="0.5" width="13" height="13.5" fill="#f7d9a0" stroke="#b59a6a"/><path d="M2 3.5H12M2 6H12M2 8.5H12M2 11H12" stroke="#c9a76a" stroke-width="0.8"/></svg>
<svg class="r" style="left:22px;top:86.5px" width="14" height="14"><path d="M1 7 H3.5 V9.5 H10.5 V7 H13 V13.5 H1Z" fill="#f3c26d"/><rect x="3.5" y="1.5" width="7" height="8" fill="#fff" stroke="#ddd" stroke-width="0.5"/><rect x="6.2" y="1" width="1.8" height="5" fill="#3f68b3"/><path d="M4 5H10L7 8.5Z" fill="#3f68b3"/></svg>
<div class="r" style="left:0px;top:107.5px;width:1005px;height:24.5px;background:#efefef"></div>
<div class="r" style="left:78px;top:107.5px;width:2px;height:24.5px;background:#ffffff"></div>
<div class="r" style="left:167px;top:107.5px;width:2px;height:24.5px;background:#ffffff"></div>
<div class="r" style="left:255px;top:107.5px;width:2px;height:24.5px;background:#ffffff"></div>
<div class="r" style="left:305px;top:107.5px;width:2px;height:24.5px;background:#ffffff"></div>
<div class="r" style="left:384px;top:107.5px;width:2px;height:24.5px;background:#ffffff"></div>
<div class="r" style="left:483px;top:107.5px;width:2px;height:24.5px;background:#ffffff"></div>
<div class="r" style="left:567px;top:107.5px;width:2px;height:24.5px;background:#ffffff"></div>
<div class="r" style="left:714px;top:107.5px;width:2px;height:24.5px;background:#ffffff"></div>
<div class="r" style="left:784px;top:107.5px;width:2px;height:24.5px;background:#ffffff"></div>
<div class="r" style="left:862px;top:107.5px;width:2px;height:24.5px;background:#ffffff"></div>
<div class="r" style="left:927px;top:107.5px;width:2px;height:24.5px;background:#ffffff"></div>
<div class="r" style="left:996px;top:107.5px;width:2px;height:24.5px;background:#ffffff"></div>
<div class="t" style="left:84.20px;top:111.50px;font-size:12.48px;line-height:12.48px;color:#464646;">35014</div>
<div class="t" style="left:173.20px;top:111.50px;font-size:11.76px;line-height:11.76px;color:#464646;">DKV Euro S...</div>
<div class="t" style="left:261.20px;top:110.51px;font-size:12.98px;line-height:12.98px;color:#464646;">Rati...</div>
<div class="t" style="left:311.20px;top:111.50px;font-size:12.48px;line-height:12.48px;color:#464646;">Eingangsr...</div>
<div class="t" style="left:390.20px;top:111.51px;font-size:12.69px;line-height:12.69px;color:#464646;">15.10.2024</div>
<div class="t" style="left:790.20px;top:112.50px;font-size:11.93px;line-height:11.93px;color:#464646;">Kaiser</div>
<div class="t" style="left:868.20px;top:111.51px;font-size:12.50px;line-height:12.50px;color:#464646;">Postein...</div>
<div class="t" style="left:933.20px;top:111.50px;font-size:12.62px;line-height:12.62px;color:#464646;">642.90</div>
<div class="t" style="left:1002.20px;top:111.51px;font-size:12.60px;line-height:12.60px;color:#464646;">2</div>
<svg class="r" style="left:4px;top:111.5px" width="14" height="15"><rect x="0.5" y="0.5" width="13" height="13.5" fill="#f7d9a0" stroke="#b59a6a"/><path d="M2 3.5H12M2 6H12M2 8.5H12M2 11H12" stroke="#c9a76a" stroke-width="0.8"/></svg>
<svg class="r" style="left:22px;top:111.5px" width="14" height="14"><path d="M1 7 H3.5 V9.5 H10.5 V7 H13 V13.5 H1Z" fill="#f3c26d"/><rect x="3.5" y="1.5" width="7" height="8" fill="#fff" stroke="#ddd" stroke-width="0.5"/><rect x="6.2" y="1" width="1.8" height="5" fill="#3f68b3"/><path d="M4 5H10L7 8.5Z" fill="#3f68b3"/></svg>
<div class="t" style="left:84.20px;top:136.50px;font-size:12.48px;line-height:12.48px;color:#464646;">35014</div>
<div class="t" style="left:173.20px;top:136.50px;font-size:11.76px;line-height:11.76px;color:#464646;">DKV Euro S...</div>
<div class="t" style="left:261.20px;top:135.51px;font-size:12.98px;line-height:12.98px;color:#464646;">Rati...</div>
<div class="t" style="left:311.20px;top:136.50px;font-size:12.48px;line-height:12.48px;color:#464646;">Eingangsr...</div>
<div class="t" style="left:390.20px;top:136.51px;font-size:12.69px;line-height:12.69px;color:#464646;">15.10.2024</div>
<div class="t" style="left:790.20px;top:137.50px;font-size:11.93px;line-height:11.93px;color:#464646;">Kaiser</div>
<div class="t" style="left:868.20px;top:136.51px;font-size:12.50px;line-height:12.50px;color:#464646;">Postein...</div>
<div class="t" style="left:933.20px;top:136.50px;font-size:12.62px;line-height:12.62px;color:#464646;">642.90</div>
<div class="t" style="left:1002.20px;top:136.51px;font-size:12.60px;line-height:12.60px;color:#464646;">2</div>
<svg class="r" style="left:4px;top:136.5px" width="14" height="15"><rect x="0.5" y="0.5" width="13" height="13.5" fill="#f7d9a0" stroke="#b59a6a"/><path d="M2 3.5H12M2 6H12M2 8.5H12M2 11H12" stroke="#c9a76a" stroke-width="0.8"/></svg>
<svg class="r" style="left:22px;top:136.5px" width="14" height="14"><path d="M1 7 H3.5 V9.5 H10.5 V7 H13 V13.5 H1Z" fill="#f3c26d"/><rect x="3.5" y="1.5" width="7" height="8" fill="#fff" stroke="#ddd" stroke-width="0.5"/><rect x="6.2" y="1" width="1.8" height="5" fill="#3f68b3"/><path d="M4 5H10L7 8.5Z" fill="#3f68b3"/></svg>
<div class="r" style="left:0px;top:157.5px;width:1005px;height:24.5px;background:#efefef"></div>
<div class="r" style="left:78px;top:157.5px;width:2px;height:24.5px;background:#ffffff"></div>
<div class="r" style="left:167px;top:157.5px;width:2px;height:24.5px;background:#ffffff"></div>
<div class="r" style="left:255px;top:157.5px;width:2px;height:24.5px;background:#ffffff"></div>
<div class="r" style="left:305px;top:157.5px;width:2px;height:24.5px;background:#ffffff"></div>
<div class="r" style="left:384px;top:157.5px;width:2px;height:24.5px;background:#ffffff"></div>
<div class="r" style="left:483px;top:157.5px;width:2px;height:24.5px;background:#ffffff"></div>
<div class="r" style="left:567px;top:157.5px;width:2px;height:24.5px;background:#ffffff"></div>
<div class="r" style="left:714px;top:157.5px;width:2px;height:24.5px;background:#ffffff"></div>
<div class="r" style="left:784px;top:157.5px;width:2px;height:24.5px;background:#ffffff"></div>
<div class="r" style="left:862px;top:157.5px;width:2px;height:24.5px;background:#ffffff"></div>
<div class="r" style="left:927px;top:157.5px;width:2px;height:24.5px;background:#ffffff"></div>
<div class="r" style="left:996px;top:157.5px;width:2px;height:24.5px;background:#ffffff"></div>
<div class="t" style="left:84.20px;top:161.50px;font-size:12.48px;line-height:12.48px;color:#464646;">35014</div>
<div class="t" style="left:173.20px;top:161.50px;font-size:11.76px;line-height:11.76px;color:#464646;">DKV Euro S...</div>
<div class="t" style="left:261.20px;top:160.51px;font-size:12.98px;line-height:12.98px;color:#464646;">Rati...</div>
<div class="t" style="left:311.20px;top:161.50px;font-size:12.48px;line-height:12.48px;color:#464646;">Eingangsr...</div>
<div class="t" style="left:390.20px;top:161.51px;font-size:12.69px;line-height:12.69px;color:#464646;">15.10.2024</div>
<div class="t" style="left:790.20px;top:162.50px;font-size:11.93px;line-height:11.93px;color:#464646;">Kaiser</div>
<div class="t" style="left:868.20px;top:161.51px;font-size:12.50px;line-height:12.50px;color:#464646;">Postein...</div>
<div class="t" style="left:933.20px;top:161.50px;font-size:12.62px;line-height:12.62px;color:#464646;">642.90</div>
<div class="t" style="left:1002.20px;top:161.51px;font-size:12.60px;line-height:12.60px;color:#464646;">2</div>
<svg class="r" style="left:4px;top:161.5px" width="14" height="15"><rect x="0.5" y="0.5" width="13" height="13.5" fill="#f7d9a0" stroke="#b59a6a"/><path d="M2 3.5H12M2 6H12M2 8.5H12M2 11H12" stroke="#c9a76a" stroke-width="0.8"/></svg>
<svg class="r" style="left:22px;top:161.5px" width="14" height="14"><path d="M1 7 H3.5 V9.5 H10.5 V7 H13 V13.5 H1Z" fill="#f3c26d"/><rect x="3.5" y="1.5" width="7" height="8" fill="#fff" stroke="#ddd" stroke-width="0.5"/><rect x="6.2" y="1" width="1.8" height="5" fill="#3f68b3"/><path d="M4 5H10L7 8.5Z" fill="#3f68b3"/></svg>
<div class="t" style="left:84.20px;top:186.50px;font-size:12.48px;line-height:12.48px;color:#464646;">35014</div>
<div class="t" style="left:173.20px;top:186.50px;font-size:11.76px;line-height:11.76px;color:#464646;">DKV Euro S...</div>
<div class="t" style="left:261.20px;top:185.51px;font-size:12.98px;line-height:12.98px;color:#464646;">Rati...</div>
<div class="t" style="left:311.20px;top:186.50px;font-size:12.48px;line-height:12.48px;color:#464646;">Eingangsr...</div>
<div class="t" style="left:390.20px;top:186.51px;font-size:12.69px;line-height:12.69px;color:#464646;">15.10.2024</div>
<div class="t" style="left:790.20px;top:187.50px;font-size:11.93px;line-height:11.93px;color:#464646;">Kaiser</div>
<div class="t" style="left:868.20px;top:186.51px;font-size:12.50px;line-height:12.50px;color:#464646;">Postein...</div>
<div class="t" style="left:933.20px;top:186.50px;font-size:12.62px;line-height:12.62px;color:#464646;">642.90</div>
<div class="t" style="left:1002.20px;top:186.51px;font-size:12.60px;line-height:12.60px;color:#464646;">2</div>
<svg class="r" style="left:4px;top:186.5px" width="14" height="15"><rect x="0.5" y="0.5" width="13" height="13.5" fill="#f7d9a0" stroke="#b59a6a"/><path d="M2 3.5H12M2 6H12M2 8.5H12M2 11H12" stroke="#c9a76a" stroke-width="0.8"/></svg>
<svg class="r" style="left:22px;top:186.5px" width="14" height="14"><path d="M1 7 H3.5 V9.5 H10.5 V7 H13 V13.5 H1Z" fill="#f3c26d"/><rect x="3.5" y="1.5" width="7" height="8" fill="#fff" stroke="#ddd" stroke-width="0.5"/><rect x="6.2" y="1" width="1.8" height="5" fill="#3f68b3"/><path d="M4 5H10L7 8.5Z" fill="#3f68b3"/></svg>
<div class="r" style="left:0px;top:207.5px;width:1005px;height:24.5px;background:#efefef"></div>
<div class="r" style="left:78px;top:207.5px;width:2px;height:24.5px;background:#ffffff"></div>
<div class="r" style="left:167px;top:207.5px;width:2px;height:24.5px;background:#ffffff"></div>
<div class="r" style="left:255px;top:207.5px;width:2px;height:24.5px;background:#ffffff"></div>
<div class="r" style="left:305px;top:207.5px;width:2px;height:24.5px;background:#ffffff"></div>
<div class="r" style="left:384px;top:207.5px;width:2px;height:24.5px;background:#ffffff"></div>
<div class="r" style="left:483px;top:207.5px;width:2px;height:24.5px;background:#ffffff"></div>
<div class="r" style="left:567px;top:207.5px;width:2px;height:24.5px;background:#ffffff"></div>
<div class="r" style="left:714px;top:207.5px;width:2px;height:24.5px;background:#ffffff"></div>
<div class="r" style="left:784px;top:207.5px;width:2px;height:24.5px;background:#ffffff"></div>
<div class="r" style="left:862px;top:207.5px;width:2px;height:24.5px;background:#ffffff"></div>
<div class="r" style="left:927px;top:207.5px;width:2px;height:24.5px;background:#ffffff"></div>
<div class="r" style="left:996px;top:207.5px;width:2px;height:24.5px;background:#ffffff"></div>
<div class="t" style="left:84.20px;top:211.50px;font-size:12.48px;line-height:12.48px;color:#464646;">35014</div>
<div class="t" style="left:173.20px;top:211.50px;font-size:11.76px;line-height:11.76px;color:#464646;">DKV Euro S...</div>
<div class="t" style="left:261.20px;top:210.51px;font-size:12.98px;line-height:12.98px;color:#464646;">Rati...</div>
<div class="t" style="left:311.20px;top:211.50px;font-size:12.48px;line-height:12.48px;color:#464646;">Eingangsr...</div>
<div class="t" style="left:390.20px;top:211.51px;font-size:12.69px;line-height:12.69px;color:#464646;">15.10.2024</div>
<div class="t" style="left:790.20px;top:212.50px;font-size:11.93px;line-height:11.93px;color:#464646;">Kaiser</div>
<div class="t" style="left:868.20px;top:211.51px;font-size:12.50px;line-height:12.50px;color:#464646;">Postein...</div>
<div class="t" style="left:933.20px;top:211.50px;font-size:12.62px;line-height:12.62px;color:#464646;">642.90</div>
<div class="t" style="left:1002.20px;top:211.51px;font-size:12.60px;line-height:12.60px;color:#464646;">2</div>
<svg class="r" style="left:4px;top:211.5px" width="15" height="16"><rect x="0.5" y="0.5" width="14" height="14" fill="#fff" stroke="#666"/><text x="8" y="6" font-size="5" font-family="Liberation Sans" font-weight="bold" fill="#333">E</text><text x="1" y="12.5" font-size="4.6" font-family="Liberation Sans" font-weight="bold" fill="#111">XML</text></svg>
<svg class="r" style="left:22px;top:211.5px" width="14" height="14"><path d="M1 7 H3.5 V9.5 H10.5 V7 H13 V13.5 H1Z" fill="#f3c26d"/><rect x="3.5" y="1.5" width="7" height="8" fill="#fff" stroke="#ddd" stroke-width="0.5"/><rect x="6.2" y="1" width="1.8" height="5" fill="#3f68b3"/><path d="M4 5H10L7 8.5Z" fill="#3f68b3"/></svg>
<div class="r" style="left:0px;top:232.5px;width:1005px;height:24.5px;background:#416bb5"></div>
<div class="r" style="left:78px;top:232.5px;width:2px;height:24.5px;background:#ffffff"></div>
<div class="r" style="left:167px;top:232.5px;width:2px;height:24.5px;background:#ffffff"></div>
<div class="r" style="left:255px;top:232.5px;width:2px;height:24.5px;background:#ffffff"></div>
<div class="r" style="left:305px;top:232.5px;width:2px;height:24.5px;background:#ffffff"></div>
<div class="r" style="left:384px;top:232.5px;width:2px;height:24.5px;background:#ffffff"></div>
<div class="r" style="left:483px;top:232.5px;width:2px;height:24.5px;background:#ffffff"></div>
<div class="r" style="left:567px;top:232.5px;width:2px;height:24.5px;background:#ffffff"></div>
<div class="r" style="left:714px;top:232.5px;width:2px;height:24.5px;background:#ffffff"></div>
<div class="r" style="left:784px;top:232.5px;width:2px;height:24.5px;background:#ffffff"></div>
<div class="r" style="left:862px;top:232.5px;width:2px;height:24.5px;background:#ffffff"></div>
<div class="r" style="left:927px;top:232.5px;width:2px;height:24.5px;background:#ffffff"></div>
<div class="r" style="left:996px;top:232.5px;width:2px;height:24.5px;background:#ffffff"></div>
<div class="r" style="left:0px;top:257.0px;width:1005px;height:1px;background:#ffffff"></div>
<div class="t" style="left:84.20px;top:236.50px;font-size:12.48px;line-height:12.48px;color:#ffffff;">35014</div>
<div class="t" style="left:173.20px;top:236.50px;font-size:11.76px;line-height:11.76px;color:#ffffff;">DKV Euro S...</div>
<div class="t" style="left:261.20px;top:235.51px;font-size:12.98px;line-height:12.98px;color:#ffffff;">Rati...</div>
<div class="t" style="left:311.20px;top:236.50px;font-size:12.48px;line-height:12.48px;color:#ffffff;">Eingangsr...</div>
<div class="t" style="left:390.20px;top:236.51px;font-size:12.69px;line-height:12.69px;color:#ffffff;">15.10.2024</div>
<div class="t" style="left:790.20px;top:237.50px;font-size:11.93px;line-height:11.93px;color:#ffffff;">Kaiser</div>
<div class="t" style="left:868.20px;top:236.51px;font-size:12.50px;line-height:12.50px;color:#ffffff;">Postein...</div>
<div class="t" style="left:933.20px;top:236.50px;font-size:12.62px;line-height:12.62px;color:#ffffff;">642.90</div>
<div class="t" style="left:1002.20px;top:236.51px;font-size:12.60px;line-height:12.60px;color:#ffffff;">2</div>
<svg class="r" style="left:4px;top:236.5px" width="15" height="16"><rect x="0.5" y="0.5" width="13" height="13.5" fill="#fff" stroke="#ccc"/><rect x="0.5" y="0.5" width="9" height="3" fill="#d02020"/><path d="M4 11 Q7 5 7 3 Q7 8 11 11 Q6 9 4 11Z" fill="none" stroke="#d03030" stroke-width="0.8"/></svg>
<svg class="r" style="left:22px;top:236.5px" width="14" height="14"><path d="M1 7 H3.5 V9.5 H10.5 V7 H13 V13.5 H1Z" fill="#f3c26d"/><rect x="3.5" y="1.5" width="7" height="8" fill="#fff" stroke="#ddd" stroke-width="0.5"/><rect x="6.2" y="1" width="1.8" height="5" fill="#3f68b3"/><path d="M4 5H10L7 8.5Z" fill="#3f68b3"/></svg>
</div>
<div class="r" style="left:0px;top:999px;width:1005px;height:15px;background:#ebebeb;"></div>
<div class="r" style="left:16px;top:999.5px;width:544px;height:14px;background:#c1c1c1;"></div>
<svg class="r" style="left:4px;top:1002px" width="7" height="9" viewBox="0 0 7 9"><path d="M6 0.5 V8.5 L1 4.5Z" fill="#9a9a9a"/></svg>
<svg class="r" style="left:995px;top:1002px" width="7" height="9" viewBox="0 0 7 9"><path d="M1 0.5 V8.5 L6 4.5Z" fill="#9a9a9a"/></svg>
<div class="r" style="left:0px;top:1014px;width:1917px;height:1px;background:#c9c9c9;"></div>
<div class="r" style="left:0px;top:1015px;width:1917px;height:24px;background:#ffffff;"></div>
<div class="t" style="left:4.50px;top:1022.51px;font-size:11.95px;line-height:11.95px;color:#555555;">Rechnungs-Eingangs-Buch</div>
<div class="t" style="left:181.30px;top:1021.51px;font-size:12.41px;line-height:12.41px;color:#555555;">Modus:</div>
<div class="t" style="left:228.30px;top:1021.51px;font-size:12.52px;line-height:12.52px;color:#a33a3a;">Änderung</div>
<div class="t" style="left:313.90px;top:1021.50px;font-size:12.56px;line-height:12.56px;color:#555555;">Gefundene Seiten / Dokumente:</div>
<div class="t" style="left:499.70px;top:1021.51px;font-size:12.08px;line-height:12.08px;color:#555555;">9 / 1</div>
<div class="t" style="left:557.00px;top:1021.51px;font-size:12.41px;line-height:12.41px;color:#555555;">Seite 9 von 9 im Dokument</div>
<div class="t" style="left:737.00px;top:1021.50px;font-size:12.15px;line-height:12.15px;color:#555555;">Benutzer:</div>
<div class="t" style="left:798.00px;top:1020.50px;font-size:13.59px;line-height:13.59px;color:#555555;">Müller</div>
<div class="t" style="left:866.00px;top:1020.50px;font-size:13.20px;line-height:13.20px;color:#555555;">...</div>
<div class="r" style="left:1009px;top:129px;width:908px;height:885px;background:#ffffff;"></div>
<div class="r" style="left:1017px;top:131px;width:1px;height:882px;background:#a0a0a0;"></div>
<div class="r" style="left:1017px;top:131px;width:881px;height:1px;background:#a0a0a0;"></div>
<div class="r" style="left:1897.5px;top:131px;width:1px;height:882px;background:#d0d0d0;"></div>
<div class="r" style="left:1017px;top:1012px;width:900px;height:1px;background:#a0a0a0;"></div>
<div class="r" style="left:1916px;top:128px;width:1px;height:886px;background:#a0a0a0;"></div>
<div class="r" style="left:1899.5px;top:131px;width:16px;height:881px;background:#e8e8e8;"></div>
<div class="r" style="left:1900px;top:149px;width:15px;height:597px;background:#c1c1c1;"></div>
<svg class="r" style="left:1903px;top:136px" width="9" height="8" viewBox="0 0 9 8"><path d="M0.5 6.5 L4.5 1.5 L8.5 6.5Z" fill="#8a8a8a"/></svg>
<svg class="r" style="left:1903px;top:1000px" width="9" height="8" viewBox="0 0 9 8"><path d="M0.5 1.5 L4.5 6.5 L8.5 1.5Z" fill="#8a8a8a"/></svg>
<div class="r" style="left:1018px;top:132px;width:879px;height:880px;overflow:hidden">
<div class="t" style="left:49.60px;top:49.01px;font-size:24.56px;line-height:24.56px;color:#111111;font-weight:bold;">Prüfbericht</div>
<div class="r" style="left:49.00px;top:95.30px;width:770.00px;height:24.50px;background:#dedede;"></div>
<div class="t" style="left:52.50px;top:103.60px;font-size:11.89px;line-height:11.89px;color:#111111;font-weight:bold;">Haftungauschluss:</div>
<div class="t" style="left:49.00px;top:137.51px;font-size:12.89px;line-height:12.89px;color:#111111;">Die Visualisierung der elektronischen Rechnung [Dokument: 1681 vom 14.11.2024 15:10] wurde auf Basis der XML-Datei "factur-</div>
<div class="t" style="left:49.00px;top:154.01px;font-size:13.11px;line-height:13.11px;color:#111111;">x.xml" automatisch erzeugt. Wir übernehmen keine Haftung für die Vollständigkeit der Daten.</div>
<div class="r" style="left:49.00px;top:182.30px;width:770.00px;height:24.70px;background:#dedede;"></div>
<div class="t" style="left:52.50px;top:189.51px;font-size:12.46px;line-height:12.46px;color:#111111;font-weight:bold;">Angaben zum geprüften Dokument</div>
<div class="t" style="left:49.00px;top:224.50px;font-size:12.57px;line-height:12.57px;color:#111111;">Referenz:</div>
<div class="t" style="left:271.00px;top:224.50px;font-size:12.81px;line-height:12.81px;color:#111111;">39fa5350-402d-4c25-a44b-acfeb2bd9e3e</div>
<div class="t" style="left:49.00px;top:241.01px;font-size:13.04px;line-height:13.04px;color:#111111;">Zeitpunkt der Prüfung:</div>
<div class="t" style="left:271.00px;top:242.01px;font-size:12.86px;line-height:12.86px;color:#111111;">14.11.2024 15:10:29</div>
<div class="t" style="left:49.00px;top:258.31px;font-size:13.23px;line-height:13.23px;color:#111111;">Erkannter Dokumenttyp:</div>
<div class="t" style="left:271.00px;top:259.30px;font-size:12.20px;line-height:12.20px;color:#111111;">EN16931 (CII)</div>
<div class="t" style="left:49.00px;top:290.81px;font-size:12.82px;line-height:12.82px;color:#111111;">Erkannter Rechnungssteller:</div>
<div class="t" style="left:271.00px;top:290.81px;font-size:12.08px;line-height:12.08px;color:#111111;">DKV Euro Service GmbH + Co. KG</div>
<div class="t" style="left:49.00px;top:308.20px;font-size:12.82px;line-height:12.82px;color:#111111;">Erkannte Rechnungsnummer:</div>
<div class="t" style="left:271.00px;top:308.21px;font-size:12.70px;line-height:12.70px;color:#111111;">20241015</div>
<div class="t" style="left:49.00px;top:325.01px;font-size:12.76px;line-height:12.76px;color:#111111;">Erkanntes Rechnungsdatum:</div>
<div class="r" style="left:49.00px;top:335.80px;width:770.00px;height:23.70px;background:#dedede;"></div>
<div class="t" style="left:52.00px;top:342.71px;font-size:12.48px;line-height:12.48px;color:#111111;font-weight:bold;">Konformitätsprüfung: Das geprüfte Dokument enthält 1 Fehler / 0 Warnungen. Es ist nicht konform zu den formalen Vorgaben.</div>
<div class="t" style="left:49.00px;top:377.61px;font-size:12.90px;line-height:12.90px;color:#111111;">Übersicht der Validierungsergebnisse:</div>
<div class="r" style="left:49.00px;top:406.00px;width:770.00px;height:16.50px;background:#efefef;"></div>
<div class="t" style="left:251.01px;top:409.30px;font-size:10.40px;line-height:10.40px;color:#111111;font-weight:bold;">Prüfschritt</div>
<div class="t" style="left:541.90px;top:409.30px;font-size:10.40px;line-height:10.40px;color:#111111;font-weight:bold;">Fehler</div>
<div class="t" style="left:633.90px;top:409.30px;font-size:10.40px;line-height:10.40px;color:#111111;font-weight:bold;">Warnungen</div>
<div class="t" style="left:731.94px;top:409.30px;font-size:10.40px;line-height:10.40px;color:#111111;font-weight:bold;">Informationen</div>
<div class="r" style="left:49.00px;top:422.50px;width:770.00px;height:1.00px;background:#d4d4d4;"></div>
<div class="r" style="left:505.30px;top:422.50px;width:1.00px;height:18.50px;background:#d4d4d4;"></div>
<div class="r" style="left:610.00px;top:422.50px;width:1.00px;height:18.50px;background:#d4d4d4;"></div>
<div class="r" style="left:715.00px;top:422.50px;width:1.00px;height:18.50px;background:#d4d4d4;"></div>
<div class="t" style="left:51.50px;top:427.51px;font-size:10.40px;line-height:10.40px;color:#111111;">XML Schema for UN/CEFACT XML (SCRDM - CII uncoupled) (val-xsd)</div>
<div class="t" style="left:507.80px;top:427.51px;font-size:10.40px;line-height:10.40px;color:#111111;">0</div>
<div class="t" style="left:612.50px;top:427.51px;font-size:10.40px;line-height:10.40px;color:#111111;">0</div>
<div class="t" style="left:717.50px;top:427.51px;font-size:10.40px;line-height:10.40px;color:#111111;">0</div>
<div class="r" style="left:49.00px;top:441.00px;width:770.00px;height:1.00px;background:#d4d4d4;"></div>
<div class="r" style="left:505.30px;top:441.00px;width:1.00px;height:18.50px;background:#d4d4d4;"></div>
<div class="r" style="left:610.00px;top:441.00px;width:1.00px;height:18.50px;background:#d4d4d4;"></div>
<div class="r" style="left:715.00px;top:441.00px;width:1.00px;height:18.50px;background:#d4d4d4;"></div>
<div class="t" style="left:51.50px;top:446.01px;font-size:10.40px;line-height:10.40px;color:#111111;">Schematron rules for EN16931 (CII) (val-sch.1)</div>
<div class="t" style="left:507.80px;top:446.01px;font-size:10.40px;line-height:10.40px;color:#111111;">1</div>
<div class="t" style="left:612.50px;top:446.01px;font-size:10.40px;line-height:10.40px;color:#111111;">0</div>
<div class="t" style="left:717.50px;top:446.01px;font-size:10.40px;line-height:10.40px;color:#111111;">0</div>
<div class="r" style="left:49.00px;top:459.50px;width:770.00px;height:1.00px;background:#d4d4d4;"></div>
<div class="r" style="left:505.30px;top:459.50px;width:1.00px;height:19.00px;background:#d4d4d4;"></div>
<div class="r" style="left:610.00px;top:459.50px;width:1.00px;height:19.00px;background:#d4d4d4;"></div>
<div class="r" style="left:715.00px;top:459.50px;width:1.00px;height:19.00px;background:#d4d4d4;"></div>
<div class="t" style="left:51.50px;top:464.51px;font-size:10.40px;line-height:10.40px;color:#111111;">(val-xml)</div>
<div class="t" style="left:507.80px;top:464.51px;font-size:10.40px;line-height:10.40px;color:#111111;">0</div>
<div class="t" style="left:612.50px;top:464.51px;font-size:10.40px;line-height:10.40px;color:#111111;">0</div>
<div class="t" style="left:717.50px;top:464.51px;font-size:10.40px;line-height:10.40px;color:#111111;">0</div>
<div class="r" style="left:49.00px;top:478.50px;width:770.00px;height:1.00px;background:#d4d4d4;"></div>
<div class="r" style="left:49.00px;top:422.50px;width:1.00px;height:56.00px;background:#d4d4d4;"></div>
<div class="r" style="left:818.00px;top:422.50px;width:1.00px;height:56.00px;background:#d4d4d4;"></div>
<div class="t" style="left:49.00px;top:496.81px;font-size:12.94px;line-height:12.94px;color:#111111;">Validierungsergebnisse im Detail:</div>
<div class="r" style="left:49.00px;top:524.50px;width:770.00px;height:16.20px;background:#efefef;"></div>
<div class="t" style="left:90.08px;top:527.41px;font-size:10.60px;line-height:10.60px;color:#111111;font-weight:bold;">Pos</div>
<div class="t" style="left:180.45px;top:527.41px;font-size:10.60px;line-height:10.60px;color:#111111;font-weight:bold;">Code</div>
<div class="t" style="left:255.05px;top:527.41px;font-size:10.60px;line-height:10.60px;color:#111111;font-weight:bold;">Adj. Grad</div>
<div class="t" style="left:559.80px;top:527.41px;font-size:10.60px;line-height:10.60px;color:#111111;font-weight:bold;">Text</div>
<div class="r" style="left:49.00px;top:540.60px;width:770.00px;height:37.50px;background:transparent;border:1px solid #d4d4d4;"></div>
<div class="r" style="left:151.40px;top:540.60px;width:1.00px;height:37.50px;background:#d4d4d4;"></div>
<div class="r" style="left:236.50px;top:540.60px;width:1.00px;height:37.50px;background:#d4d4d4;"></div>
<div class="r" style="left:322.00px;top:540.60px;width:1.00px;height:37.50px;background:#d4d4d4;"></div>
<div class="r" style="left:322.00px;top:559.60px;width:497.00px;height:1.00px;background:#d4d4d4;"></div>
<div class="t" style="left:51.00px;top:545.80px;font-size:10.80px;line-height:10.80px;color:#c8302c;">val-sch.1.1</div>
<div class="t" style="left:153.50px;top:545.80px;font-size:10.80px;line-height:10.80px;color:#c8302c;">BR-02</div>
<div class="t" style="left:238.50px;top:545.80px;font-size:10.80px;line-height:10.80px;color:#c8302c;">error</div>
<div class="t" style="left:324.00px;top:545.81px;font-size:10.80px;line-height:10.80px;color:#c8302c;">[BR-02]-An Invoice shall have an Invoice number (BT-1).</div>
<div class="t" style="left:324.00px;top:564.00px;font-size:10.80px;line-height:10.80px;color:#c8302c;">Pfad: /rsm:CrossIndustryInvoice</div>
<div class="r" style="left:49.00px;top:593.40px;width:770.00px;height:23.30px;background:#dedede;"></div>
<div class="t" style="left:52.00px;top:600.01px;font-size:12.34px;line-height:12.34px;color:#d02a2a;font-weight:bold;">Bewertung: Es wird empfohlen das Dokument zurückzuweisen.</div>
<div class="r" style="left:49.00px;top:632.00px;width:770.00px;height:23.50px;background:#dedede;"></div>
<div class="t" style="left:52.00px;top:638.71px;font-size:12.21px;line-height:12.21px;color:#111111;font-weight:bold;">Inhalt des Rechnungsdokuments:</div>
<div class="t" style="left:52.50px;top:673.00px;font-size:10.70px;line-height:10.70px;color:#8a8a8a;">0001</div>
<div class="t" style="left:94.00px;top:673.00px;font-size:10.70px;line-height:10.70px;color:#8a8a8a;">CrossIndustryInvoice</div>
<div class="r" style="left:49.00px;top:686.30px;width:770.00px;height:1.00px;background:#a8a8a8;"></div>
<div class="t" style="left:52.50px;top:690.03px;font-size:10.70px;line-height:10.70px;color:#8a8a8a;">0002</div>
<div class="t" style="left:104.40px;top:690.03px;font-size:10.70px;line-height:10.70px;color:#8a8a8a;">ExchangedDocumentContext</div>
<div class="r" style="left:49.00px;top:703.32px;width:770.00px;height:1.00px;background:#a8a8a8;"></div>
<div class="t" style="left:52.50px;top:707.05px;font-size:10.70px;line-height:10.70px;color:#8a8a8a;">0003</div>
<div class="t" style="left:121.30px;top:707.05px;font-size:10.70px;line-height:10.70px;color:#8a8a8a;">GuidelineSpecifiedDocumentContextParameter</div>
<div class="r" style="left:49.00px;top:720.34px;width:770.00px;height:1.00px;background:#a8a8a8;"></div>
<div class="t" style="left:52.50px;top:724.06px;font-size:10.70px;line-height:10.70px;color:#8a8a8a;">0004</div>
<div class="t" style="left:137.90px;top:724.06px;font-size:10.70px;line-height:10.70px;color:#8a8a8a;">ID</div>
<div class="t" style="left:151.60px;top:724.06px;font-size:10.70px;line-height:10.70px;color:#111111;font-weight:bold;">urn:cen.eu:en16931:2017</div>
<div class="r" style="left:49.00px;top:737.36px;width:770.00px;height:1.00px;background:#a8a8a8;"></div>
<div class="t" style="left:52.50px;top:741.09px;font-size:10.70px;line-height:10.70px;color:#8a8a8a;">0005</div>
<div class="t" style="left:104.40px;top:741.09px;font-size:10.70px;line-height:10.70px;color:#8a8a8a;">ExchangedDocument</div>
<div class="r" style="left:49.00px;top:754.38px;width:770.00px;height:1.00px;background:#a8a8a8;"></div>
<div class="t" style="left:52.50px;top:758.11px;font-size:10.70px;line-height:10.70px;color:#8a8a8a;">0006</div>
<div class="t" style="left:121.30px;top:758.11px;font-size:10.70px;line-height:10.70px;color:#8a8a8a;">ID</div>
<div class="r" style="left:49.00px;top:771.40px;width:770.00px;height:1.00px;background:#a8a8a8;"></div>
<div class="t" style="left:52.50px;top:775.14px;font-size:10.70px;line-height:10.70px;color:#8a8a8a;">0007</div>
<div class="t" style="left:121.30px;top:775.14px;font-size:10.70px;line-height:10.70px;color:#8a8a8a;">TypeCode</div>
<div class="t" style="left:173.07px;top:775.14px;font-size:10.70px;line-height:10.70px;color:#111111;font-weight:bold;">380</div>
<div class="r" style="left:49.00px;top:788.42px;width:770.00px;height:1.00px;background:#a8a8a8;"></div>
<div class="t" style="left:52.50px;top:792.14px;font-size:10.70px;line-height:10.70px;color:#8a8a8a;">0008</div>
<div class="t" style="left:121.30px;top:792.14px;font-size:10.70px;line-height:10.70px;color:#8a8a8a;">IssueDateTime</div>
<div class="r" style="left:49.00px;top:805.44px;width:770.00px;height:1.00px;background:#a8a8a8;"></div>
<div class="t" style="left:52.50px;top:809.17px;font-size:10.70px;line-height:10.70px;color:#8a8a8a;">0009</div>
<div class="t" style="left:137.90px;top:809.17px;font-size:10.70px;line-height:10.70px;color:#8a8a8a;">DateTimeString</div>
<div class="t" style="left:214.83px;top:809.17px;font-size:10.70px;line-height:10.70px;color:#111111;font-weight:bold;">20241015</div>
<div class="t" style="left:265.43px;top:809.17px;font-size:10.70px;line-height:10.70px;color:#8a8a8a;font-style:italic;">format= 102</div>
<div class="r" style="left:49.00px;top:822.46px;width:770.00px;height:1.00px;background:#a8a8a8;"></div>
<div class="t" style="left:52.50px;top:826.19px;font-size:10.70px;line-height:10.70px;color:#8a8a8a;">0010</div>
<div class="t" style="left:121.30px;top:826.19px;font-size:10.70px;line-height:10.70px;color:#8a8a8a;">IncludedNote</div>
<div class="r" style="left:49.00px;top:839.48px;width:770.00px;height:1.00px;background:#a8a8a8;"></div>
<div class="t" style="left:52.50px;top:843.22px;font-size:10.70px;line-height:10.70px;color:#8a8a8a;">0011</div>
<div class="t" style="left:137.90px;top:843.22px;font-size:10.70px;line-height:10.70px;color:#8a8a8a;">Content</div>
<div class="t" style="left:178.37px;top:843.22px;font-size:10.70px;line-height:10.70px;color:#111111;font-weight:bold;">SEPA-Lastschrift</div>
<div class="r" style="left:49.00px;top:856.50px;width:770.00px;height:1.00px;background:#a8a8a8;"></div>
<div class="t" style="left:52.50px;top:860.23px;font-size:10.70px;line-height:10.70px;color:#8a8a8a;">0012</div>
<div class="t" style="left:137.90px;top:860.23px;font-size:10.70px;line-height:10.70px;color:#8a8a8a;">SubjectCode</div>
<div class="t" style="left:202.17px;top:860.23px;font-size:10.70px;line-height:10.70px;color:#111111;font-weight:bold;">AAB</div>
<div class="r" style="left:49.00px;top:873.52px;width:770.00px;height:1.00px;background:#a8a8a8;"></div>
<div class="t" style="left:52.50px;top:877.25px;font-size:10.70px;line-height:10.70px;color:#8a8a8a;">0013</div>
<div class="t" style="left:121.30px;top:877.25px;font-size:10.70px;line-height:10.70px;color:#8a8a8a;">IncludedNote</div>
<div class="r" style="left:49.00px;top:890.54px;width:770.00px;height:1.00px;background:#a8a8a8;"></div>
</div>
<div class="r" style="left:0px;top:128px;width:1917px;height:1px;background:#bdbdbd;"></div>
</body></html>
